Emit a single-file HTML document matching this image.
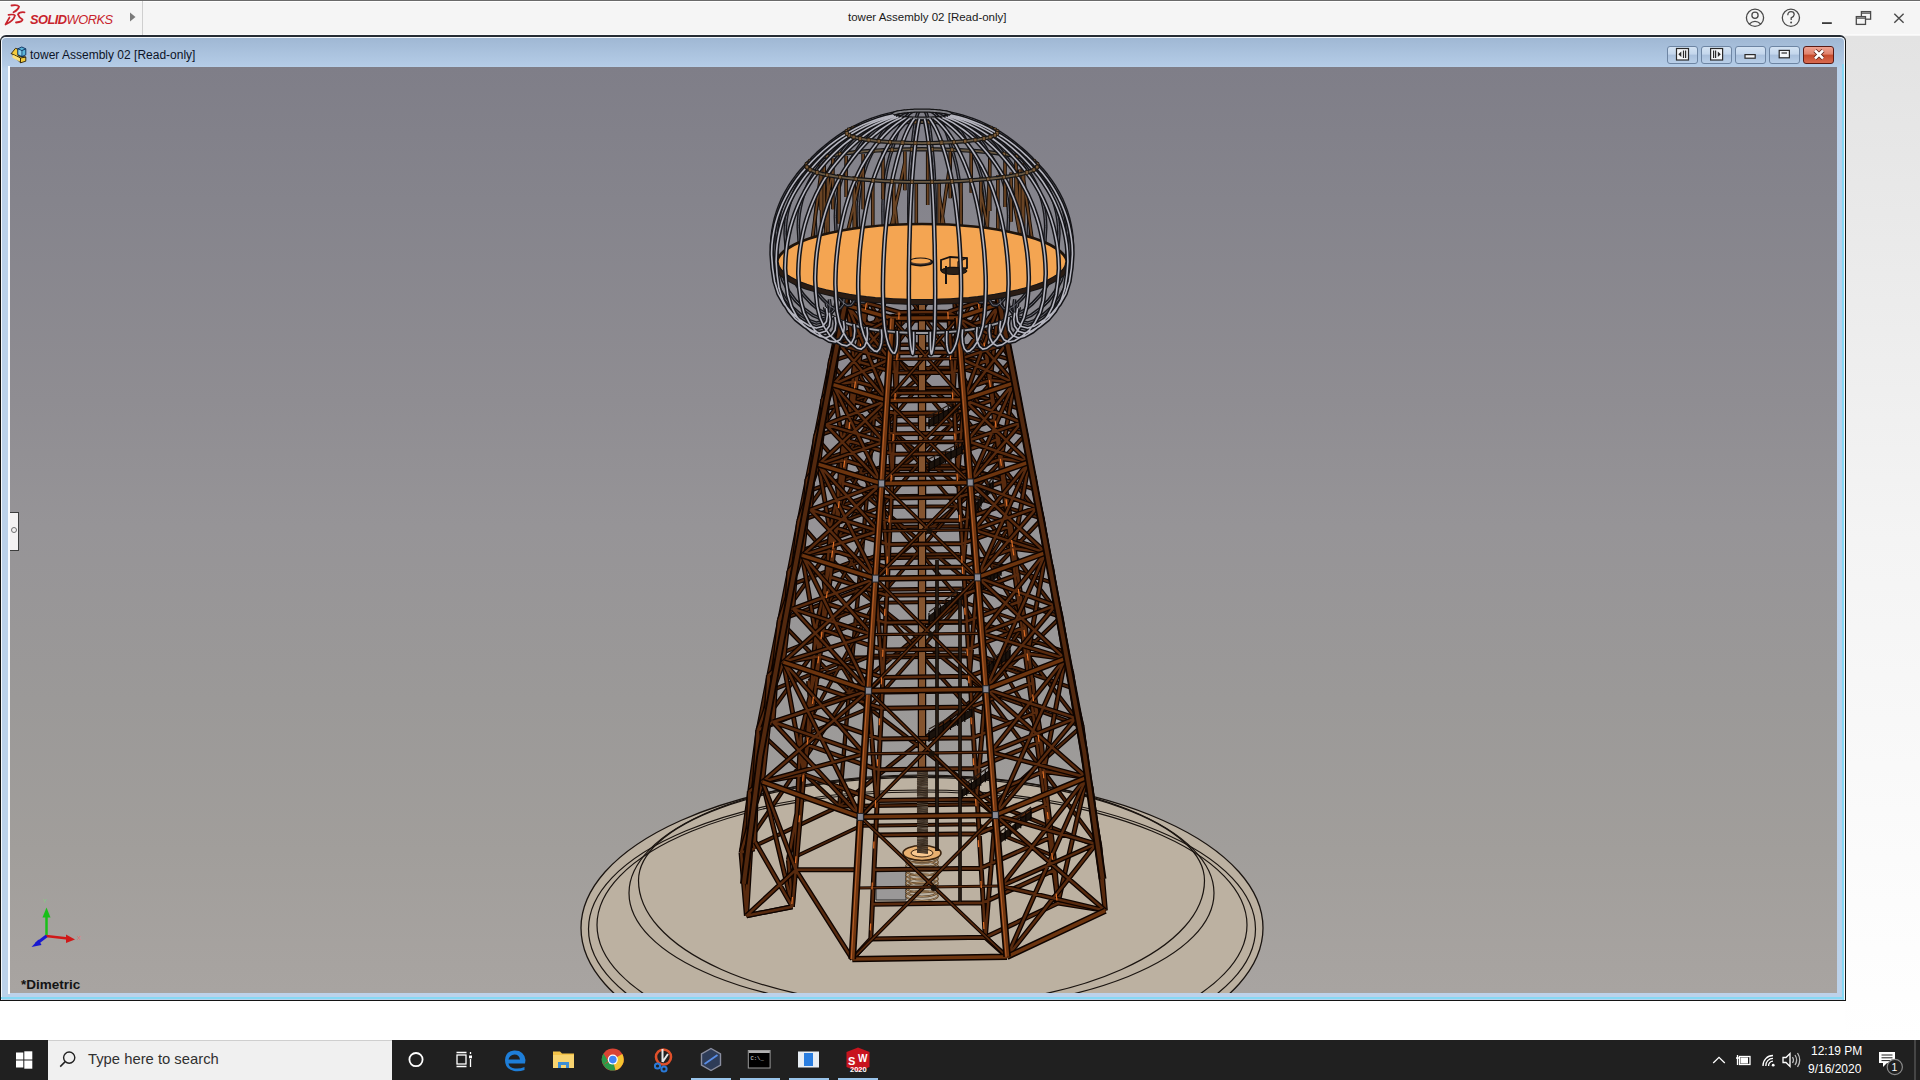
<!DOCTYPE html>
<html><head><meta charset="utf-8">
<style>
*{margin:0;padding:0;box-sizing:border-box}
html,body{width:1920px;height:1080px;overflow:hidden;background:#fff;font-family:"Liberation Sans",sans-serif;position:relative}
.abs{position:absolute}
#topbar{left:0;top:0;width:1920px;height:36px;background:#f5f5f5;border-top:1px solid #6a6a6a}
#rightbg{left:1845px;top:36px;width:75px;height:1004px;background:linear-gradient(#e3e3e3,#f4f4f4 50%,#ffffff)}
#win{left:0;top:35px;width:1846px;height:966px;border:1px solid #141414;border-top:2px solid #262c34;border-radius:6px 6px 0 0;background:linear-gradient(#9fb7d3 0px,#b3cbe6 28px,#bad1ea 32px,#bcd2ea 100%)}
#winin{left:1px;top:37px;width:1844px;height:963px;border:1px solid #f4f8fc;border-radius:5px 5px 0 0;border-bottom:none}
#vp{left:10px;top:67px;width:1827px;height:926px;background:linear-gradient(rgb(127,126,136) 0%,rgb(133,132,140) 14.4%,rgb(143,141,146) 36%,rgb(150,148,151) 49.5%,rgb(155,153,152) 68.4%,rgb(161,158,155) 84.6%,rgb(167,163,160) 97%,rgb(168,164,161) 100%)}
#taskbar{left:0;top:1040px;width:1920px;height:40px;background:#202020}
.t12{font-size:12px;color:#000;white-space:nowrap}
.wbtn{position:absolute;top:46px;width:31px;height:18px;border:1px solid #6d85a3;border-radius:3px;background:linear-gradient(#d4e3f3 0%,#c3d6ec 45%,#a9c0dc 50%,#b9cfe8 100%)}
.wbtn.cl{border-color:#5a1a14;background:linear-gradient(#eea292 0%,#e0826c 45%,#c64a2c 50%,#d86a50 100%)}
</style></head><body>
<div id="topbar" class="abs"></div>
<div class="abs" style="left:0;top:1px;width:1920px;height:1px;background:#ffffff"></div>
<div class="abs" style="left:0;top:34px;width:1920px;height:1px;background:#fbfbfb"></div>
<div class="abs" style="left:142px;top:1px;width:1px;height:34px;background:#cfcfcf"></div>
<!-- SW logo -->
<svg class="abs" style="left:0;top:0" width="30" height="30" viewBox="0 0 30 30">
<path d="M11.5,5.5 Q17.5,4.5 19,6.5 Q18.5,9.5 13.5,12.3" stroke="#c8232c" stroke-width="1.8" fill="none" stroke-linecap="round"/>
<path d="M8.5,14.8 Q14,14.0 15,15.5 Q13.5,21 5.5,24.5 L9.5,17.5" stroke="#c8232c" stroke-width="1.7" fill="none" stroke-linecap="round" stroke-linejoin="round"/>
<path d="M24.5,12.3 Q19,11.8 18,14.5 Q19,17.5 22.5,19.5 Q23,21.7 16,22.5" stroke="#c8232c" stroke-width="1.8" fill="none" stroke-linecap="round"/>
</svg>
<div class="abs" style="left:30px;top:11.5px;font-size:12.8px;color:#c8232c;white-space:nowrap;font-style:italic;letter-spacing:-0.5px"><b>SOLID</b><span style="font-weight:normal">WORKS</span></div>
<svg class="abs" style="left:128px;top:11px" width="10" height="12"><path d="M2,1.5 L7.5,6 L2,10.5 Z" fill="#7a7a7a"/></svg>
<div class="abs" style="left:848px;top:11px;font-size:11.5px;color:#1a1a1a;white-space:nowrap">tower Assembly 02 [Read-only]</div>
<!-- top right icons -->
<svg class="abs" style="left:1740px;top:3px" width="180" height="30" viewBox="1740 3 180 30">
<g fill="none" stroke="#4a4a4a" stroke-width="1.3">
<circle cx="1755" cy="17.8" r="8.6"/>
<circle cx="1755" cy="15.2" r="3.1"/>
<path d="M1749.3,24 Q1755,18.8 1760.7,24"/>
<circle cx="1790.9" cy="17.8" r="8.6"/>
<path d="M1787.8,15.2 Q1787.8,11.7 1791,11.7 Q1794.2,11.7 1794.2,14.5 Q1794.2,16.3 1791.2,17.8 L1791.2,20"/>
<rect x="1861.4" y="11.6" width="9.2" height="7.6"/>
<rect x="1856.3" y="16.6" width="9.2" height="7.8" fill="#f5f5f5"/>
<path d="M1856.3,18.2 H1865.5 M1861.4,13.2 H1870.6"/>
<path d="M1894.3,13.7 L1903.6,22.8 M1903.6,13.7 L1894.3,22.8" stroke-width="1.4"/>
</g>
<circle cx="1791.1" cy="22.6" r="1" fill="#4a4a4a"/>
<rect x="1822" y="22.2" width="9.8" height="1.8" fill="#3a3a3a"/>
</svg>
<div id="rightbg" class="abs"></div>
<div id="win" class="abs"></div>
<div id="winin" class="abs"></div>
<div class="abs" style="left:1842px;top:64px;width:2px;height:936px;background:#86d8f4"></div>
<div class="abs" style="left:1px;top:997px;width:1843px;height:2px;background:#86d8f4"></div>
<div class="abs" style="left:8px;top:66px;width:2px;height:928px;background:#f8fbff"></div>
<!-- doc icon -->
<svg class="abs" style="left:10px;top:46px" width="20" height="18" viewBox="10 46 20 18">
<path d="M11.3,53.5 L15.5,48.3 L18.2,49.2 L18.2,56 L25.8,57 L25.8,61.2 L20.5,62.8 Z" fill="#f4cc3c" stroke="#2a2008" stroke-width="0.9" stroke-linejoin="round"/>
<path d="M11.3,53.5 L20.5,58 L25.8,57 M20.5,58 L20.5,62.8" fill="none" stroke="#2a2008" stroke-width="0.9"/>
<path d="M12.5,54.5 L19.8,58.2 L19.8,61.5 L12.5,57.8 Z" fill="#fbe27a"/>
<path d="M17.8,48.8 L21.8,47 L25.8,48.8 L25.8,54.8 L21.8,56.6 L17.8,54.8 Z" fill="#5ab4d8" stroke="#0a2a5a" stroke-width="0.9" stroke-linejoin="round"/>
<path d="M17.8,48.8 L21.8,50.6 L25.8,48.8 M21.8,50.6 V56.6" fill="none" stroke="#0a2a5a" stroke-width="0.9"/>
<path d="M18.6,49.6 L21.4,50.9 L21.4,55.4 L18.6,54.2 Z" fill="#8ad0ec"/>
</svg>
<div class="abs t12" style="left:30px;top:48px;color:#0c1428">tower Assembly 02 [Read-only]</div>
<!-- window buttons -->
<div class="wbtn" style="left:1667px"></div>
<div class="wbtn" style="left:1701px"></div>
<div class="wbtn" style="left:1735px"></div>
<div class="wbtn" style="left:1769px"></div>
<div class="wbtn cl" style="left:1803px"></div>
<svg class="abs" style="left:1660px;top:44px" width="180" height="22" viewBox="1660 44 180 22">
<g fill="#f4f6f8" stroke="#2a2a2a" stroke-width="1.2">
<rect x="1676.5" y="48.5" width="12" height="11.5"/>
<rect x="1710.6" y="48.5" width="12" height="11.5"/>
<rect x="1745" y="54.6" width="10.2" height="3.6"/>
<rect x="1779.2" y="50.4" width="10.2" height="7.4"/>
</g>
<g stroke="#2a2a2a" stroke-width="1.2" fill="none">
<path d="M1683.5,50.5 V58 M1685.6,50.5 V58"/>
<path d="M1713.6,50.5 V58 M1715.6,50.5 V58"/>
<path d="M1781.5,53 H1787"/>
</g>
<path d="M1678.3,54.2 L1681.3,51.5 V57 Z" fill="#2a2a2a"/>
<path d="M1720.8,54.2 L1717.8,51.5 V57 Z" fill="#2a2a2a"/>
<path d="M1815,50.5 L1823,58.5 M1823,50.5 L1815,58.5" stroke="#5a2018" stroke-width="4.2"/>
<path d="M1815,50.5 L1823,58.5 M1823,50.5 L1815,58.5" stroke="#ffffff" stroke-width="2.6"/>
</svg>
<div id="vp" class="abs"></div>
<svg class="abs" style="left:0;top:0" width="1920" height="1080" viewBox="0 0 1920 1080">
<defs><clipPath id="vpc"><rect x="10" y="67" width="1827" height="926"/></clipPath></defs>
<g clip-path="url(#vpc)">
<ellipse cx="922" cy="928" rx="341" ry="152" fill="#bcb1a1" stroke="#1a1410" stroke-width="1.3"/><ellipse cx="922" cy="929" rx="333.5" ry="139" fill="none" stroke="#1a1410" stroke-width="1.2"/><ellipse cx="922" cy="925" rx="325" ry="133" fill="none" stroke="#1a1410" stroke-width="1.2"/><ellipse cx="921.5" cy="893" rx="292.5" ry="118" fill="none" stroke="#1a1410" stroke-width="1.2"/><path d="M638.5,880.4 A283,103 0 0 1 1204.5,880.4 A283,126 0 0 1 638.5,880.4 Z" fill="none" stroke="#1a1410" stroke-width="1.2"/>
<path d="M952.3,273.0 L880.4,345.0 M886.5,273.7 L957.5,344.2 M954.0,296.5 L884.5,297.2 M955.8,320.0 L882.5,320.7 M957.5,344.2 L874.1,416.2 M880.4,345.0 L962.8,415.2 M959.3,367.6 L878.3,368.5 M961.0,391.1 L876.2,392.0 M962.8,415.2 L866.9,496.6 M874.1,416.2 L968.9,495.4 M964.8,441.7 L871.7,442.7 M966.8,468.2 L869.4,469.3 M968.9,495.4 L858.5,589.9 M866.9,496.6 L976.0,588.4 M971.2,526.1 L864.1,527.4 M973.6,556.8 L861.4,558.2 M976.0,588.4 L849.0,692.8 M858.5,589.9 L984.0,691.0 M978.7,622.2 L855.3,623.8 M981.3,656.1 L852.2,657.8 M984.0,691.0 L839.3,806.2 M849.0,692.8 L994.1,804.0 M952.3,273.0 L886.5,273.7 M957.5,344.2 L880.4,345.0 M962.8,415.2 L874.1,416.2 M968.9,495.4 L866.9,496.6 M976.0,588.4 L858.5,589.9 M984.0,691.0 L849.0,692.8 M994.1,804.0 L839.3,806.2 M886.5,273.7 L830.3,361.7 M845.5,287.2 L880.4,345.0 M884.5,297.2 L840.5,311.8 M882.5,320.7 L835.5,336.4 M880.4,345.0 L815.5,436.6 M830.3,361.7 L874.1,416.2 M878.3,368.5 L825.4,386.4 M876.2,392.0 L820.5,411.1 M874.1,416.2 L798.7,521.4 M815.5,436.6 L866.9,496.6 M871.7,442.7 L809.9,464.6 M869.4,469.3 L804.4,492.6 M866.9,496.6 L779.3,620.4 M798.7,521.4 L858.5,589.9 M864.1,527.4 L792.3,554.1 M861.4,558.2 L785.9,586.8 M858.5,589.9 L757.8,730.4 M779.3,620.4 L849.0,692.8 M855.3,623.8 L772.2,656.7 M852.2,657.8 L765.1,693.0 M849.0,692.8 L741.1,852.4 M757.8,730.4 L839.3,806.2 M886.5,273.7 L845.5,287.2 M880.4,345.0 L830.3,361.7 M874.1,416.2 L815.5,436.6 M866.9,496.6 L798.7,521.4 M858.5,589.9 L779.3,620.4 M849.0,692.8 L757.8,730.4 M839.3,806.2 L741.1,852.4 M996.6,285.7 L957.5,344.2 M952.3,273.0 L1011.4,359.9 M1001.5,310.2 L954.0,296.5 M1006.4,334.6 L955.8,320.0 M1011.4,359.9 L962.8,415.2 M957.5,344.2 L1025.8,434.3 M1016.2,384.4 L959.3,367.6 M1020.9,409.0 L961.0,391.1 M1025.8,434.3 L968.9,495.4 M962.8,415.2 L1042.2,518.6 M1031.2,462.1 L964.8,441.7 M1036.6,489.9 L966.8,468.2 M1042.2,518.6 L976.0,588.4 M968.9,495.4 L1061.0,616.9 M1048.4,551.0 L971.2,526.1 M1054.6,583.5 L973.6,556.8 M1061.0,616.9 L984.0,691.0 M976.0,588.4 L1081.9,726.1 M1067.9,652.9 L978.7,622.2 M1074.8,689.0 L981.3,656.1 M1081.9,726.1 L994.1,804.0 M984.0,691.0 L1099.9,847.3 M996.6,285.7 L952.3,273.0 M1011.4,359.9 L957.5,344.2 M1025.8,434.3 L962.8,415.2 M1042.2,518.6 L968.9,495.4 M1061.0,616.9 L976.0,588.4 M1081.9,726.1 L984.0,691.0 M1099.9,847.3 L994.1,804.0 M996.6,285.7 L1011.4,359.9 M1011.4,359.9 L1025.8,434.3 M1025.8,434.3 L1042.2,518.6 M1042.2,518.6 L1061.0,616.9 M1061.0,616.9 L1081.9,726.1 M1081.9,726.1 L1099.9,847.3 M952.3,273.0 L957.5,344.2 M957.5,344.2 L962.8,415.2 M962.8,415.2 L968.9,495.4 M968.9,495.4 L976.0,588.4 M976.0,588.4 L984.0,691.0 M984.0,691.0 L994.1,804.0 M886.5,273.7 L880.4,345.0 M880.4,345.0 L874.1,416.2 M874.1,416.2 L866.9,496.6 M866.9,496.6 L858.5,589.9 M858.5,589.9 L849.0,692.8 M849.0,692.8 L839.3,806.2 M845.5,287.2 L830.3,361.7 M830.3,361.7 L815.5,436.6 M815.5,436.6 L798.7,521.4 M798.7,521.4 L779.3,620.4 M779.3,620.4 L757.8,730.4 M757.8,730.4 L741.1,852.4" stroke="#0e0400" stroke-width="4.4" fill="none" stroke-linecap="butt"/><path d="M952.3,273.0 L880.4,345.0 M886.5,273.7 L957.5,344.2 M954.0,296.5 L884.5,297.2 M955.8,320.0 L882.5,320.7 M957.5,344.2 L874.1,416.2 M880.4,345.0 L962.8,415.2 M959.3,367.6 L878.3,368.5 M961.0,391.1 L876.2,392.0 M962.8,415.2 L866.9,496.6 M874.1,416.2 L968.9,495.4 M964.8,441.7 L871.7,442.7 M966.8,468.2 L869.4,469.3 M968.9,495.4 L858.5,589.9 M866.9,496.6 L976.0,588.4 M971.2,526.1 L864.1,527.4 M973.6,556.8 L861.4,558.2 M976.0,588.4 L849.0,692.8 M858.5,589.9 L984.0,691.0 M978.7,622.2 L855.3,623.8 M981.3,656.1 L852.2,657.8 M984.0,691.0 L839.3,806.2 M849.0,692.8 L994.1,804.0 M952.3,273.0 L886.5,273.7 M957.5,344.2 L880.4,345.0 M962.8,415.2 L874.1,416.2 M968.9,495.4 L866.9,496.6 M976.0,588.4 L858.5,589.9 M984.0,691.0 L849.0,692.8 M994.1,804.0 L839.3,806.2 M886.5,273.7 L830.3,361.7 M845.5,287.2 L880.4,345.0 M884.5,297.2 L840.5,311.8 M882.5,320.7 L835.5,336.4 M880.4,345.0 L815.5,436.6 M830.3,361.7 L874.1,416.2 M878.3,368.5 L825.4,386.4 M876.2,392.0 L820.5,411.1 M874.1,416.2 L798.7,521.4 M815.5,436.6 L866.9,496.6 M871.7,442.7 L809.9,464.6 M869.4,469.3 L804.4,492.6 M866.9,496.6 L779.3,620.4 M798.7,521.4 L858.5,589.9 M864.1,527.4 L792.3,554.1 M861.4,558.2 L785.9,586.8 M858.5,589.9 L757.8,730.4 M779.3,620.4 L849.0,692.8 M855.3,623.8 L772.2,656.7 M852.2,657.8 L765.1,693.0 M849.0,692.8 L741.1,852.4 M757.8,730.4 L839.3,806.2 M886.5,273.7 L845.5,287.2 M880.4,345.0 L830.3,361.7 M874.1,416.2 L815.5,436.6 M866.9,496.6 L798.7,521.4 M858.5,589.9 L779.3,620.4 M849.0,692.8 L757.8,730.4 M839.3,806.2 L741.1,852.4 M996.6,285.7 L957.5,344.2 M952.3,273.0 L1011.4,359.9 M1001.5,310.2 L954.0,296.5 M1006.4,334.6 L955.8,320.0 M1011.4,359.9 L962.8,415.2 M957.5,344.2 L1025.8,434.3 M1016.2,384.4 L959.3,367.6 M1020.9,409.0 L961.0,391.1 M1025.8,434.3 L968.9,495.4 M962.8,415.2 L1042.2,518.6 M1031.2,462.1 L964.8,441.7 M1036.6,489.9 L966.8,468.2 M1042.2,518.6 L976.0,588.4 M968.9,495.4 L1061.0,616.9 M1048.4,551.0 L971.2,526.1 M1054.6,583.5 L973.6,556.8 M1061.0,616.9 L984.0,691.0 M976.0,588.4 L1081.9,726.1 M1067.9,652.9 L978.7,622.2 M1074.8,689.0 L981.3,656.1 M1081.9,726.1 L994.1,804.0 M984.0,691.0 L1099.9,847.3 M996.6,285.7 L952.3,273.0 M1011.4,359.9 L957.5,344.2 M1025.8,434.3 L962.8,415.2 M1042.2,518.6 L968.9,495.4 M1061.0,616.9 L976.0,588.4 M1081.9,726.1 L984.0,691.0 M1099.9,847.3 L994.1,804.0 M996.6,285.7 L1011.4,359.9 M1011.4,359.9 L1025.8,434.3 M1025.8,434.3 L1042.2,518.6 M1042.2,518.6 L1061.0,616.9 M1061.0,616.9 L1081.9,726.1 M1081.9,726.1 L1099.9,847.3 M952.3,273.0 L957.5,344.2 M957.5,344.2 L962.8,415.2 M962.8,415.2 L968.9,495.4 M968.9,495.4 L976.0,588.4 M976.0,588.4 L984.0,691.0 M984.0,691.0 L994.1,804.0 M886.5,273.7 L880.4,345.0 M880.4,345.0 L874.1,416.2 M874.1,416.2 L866.9,496.6 M866.9,496.6 L858.5,589.9 M858.5,589.9 L849.0,692.8 M849.0,692.8 L839.3,806.2 M845.5,287.2 L830.3,361.7 M830.3,361.7 L815.5,436.6 M815.5,436.6 L798.7,521.4 M798.7,521.4 L779.3,620.4 M779.3,620.4 L757.8,730.4 M757.8,730.4 L741.1,852.4" stroke="#4a230b" stroke-width="2.0" fill="none" stroke-linecap="butt"/><path d="M944.5,278.9 L891.2,352.1 M895.8,279.4 L948.4,351.5 M946.4,315.2 L893.5,315.7 M948.4,351.5 L886.6,424.8 M891.2,352.1 L952.3,424.1 M950.3,387.8 L888.9,388.4 M952.3,424.1 L881.3,507.1 M886.6,424.8 L956.7,506.2 M954.5,465.2 L883.9,466.0 M956.7,506.2 L875.0,602.8 M881.3,507.1 L962.0,601.7 M959.4,554.0 L878.2,554.9 M962.0,601.7 L868.0,708.7 M875.0,602.8 L968.0,707.3 M965.0,654.5 L871.5,655.7 M944.5,278.9 L895.8,279.4 M948.4,351.5 L891.2,352.1 M952.3,424.1 L886.6,424.8 M956.7,506.2 L881.3,507.1 M962.0,601.7 L875.0,602.8 M968.0,707.3 L868.0,708.7 M975.6,824.2 L861.1,825.8 M895.8,279.4 L854.2,364.5 M865.4,289.4 L891.2,352.1 M893.5,315.7 L859.8,326.9 M891.2,352.1 L843.2,439.9 M854.2,364.5 L886.6,424.8 M888.9,388.4 L848.7,402.2 M886.6,424.8 L830.8,525.5 M843.2,439.9 L881.3,507.1 M883.9,466.0 L837.0,482.7 M881.3,507.1 L816.4,625.4 M830.8,525.5 L875.0,602.8 M878.2,554.9 L823.6,575.4 M875.0,602.8 L800.6,736.5 M816.4,625.4 L868.0,708.7 M871.5,655.7 L808.5,680.9 M895.8,279.4 L865.4,289.4 M891.2,352.1 L854.2,364.5 M886.6,424.8 L843.2,439.9 M881.3,507.1 L830.8,525.5 M875.0,602.8 L816.4,625.4 M868.0,708.7 L800.6,736.5 M861.1,825.8 L788.4,860.0 M977.3,288.3 L948.4,351.5 M944.5,278.9 L988.2,363.1 M982.7,325.7 L946.4,315.2 M988.2,363.1 L952.3,424.1 M948.4,351.5 L998.9,438.2 M993.5,400.6 L950.3,387.8 M998.9,438.2 L956.7,506.2 M952.3,424.1 L1011.0,523.4 M1004.9,480.8 L954.5,465.2 M1011.0,523.4 L962.0,601.7 M956.7,506.2 L1024.9,622.8 M1017.9,573.1 L959.4,554.0 M1024.9,622.8 L968.0,707.3 M962.0,601.7 L1040.4,733.3 M1032.6,678.1 L965.0,654.5 M977.3,288.3 L944.5,278.9 M988.2,363.1 L948.4,351.5 M998.9,438.2 L952.3,424.1 M1011.0,523.4 L956.7,506.2 M1024.9,622.8 L962.0,601.7 M1040.4,733.3 L968.0,707.3 M1054.0,856.2 L975.6,824.2" stroke="#0e0400" stroke-width="4.0" fill="none" stroke-linecap="butt"/><path d="M944.5,278.9 L891.2,352.1 M895.8,279.4 L948.4,351.5 M946.4,315.2 L893.5,315.7 M948.4,351.5 L886.6,424.8 M891.2,352.1 L952.3,424.1 M950.3,387.8 L888.9,388.4 M952.3,424.1 L881.3,507.1 M886.6,424.8 L956.7,506.2 M954.5,465.2 L883.9,466.0 M956.7,506.2 L875.0,602.8 M881.3,507.1 L962.0,601.7 M959.4,554.0 L878.2,554.9 M962.0,601.7 L868.0,708.7 M875.0,602.8 L968.0,707.3 M965.0,654.5 L871.5,655.7 M944.5,278.9 L895.8,279.4 M948.4,351.5 L891.2,352.1 M952.3,424.1 L886.6,424.8 M956.7,506.2 L881.3,507.1 M962.0,601.7 L875.0,602.8 M968.0,707.3 L868.0,708.7 M975.6,824.2 L861.1,825.8 M895.8,279.4 L854.2,364.5 M865.4,289.4 L891.2,352.1 M893.5,315.7 L859.8,326.9 M891.2,352.1 L843.2,439.9 M854.2,364.5 L886.6,424.8 M888.9,388.4 L848.7,402.2 M886.6,424.8 L830.8,525.5 M843.2,439.9 L881.3,507.1 M883.9,466.0 L837.0,482.7 M881.3,507.1 L816.4,625.4 M830.8,525.5 L875.0,602.8 M878.2,554.9 L823.6,575.4 M875.0,602.8 L800.6,736.5 M816.4,625.4 L868.0,708.7 M871.5,655.7 L808.5,680.9 M895.8,279.4 L865.4,289.4 M891.2,352.1 L854.2,364.5 M886.6,424.8 L843.2,439.9 M881.3,507.1 L830.8,525.5 M875.0,602.8 L816.4,625.4 M868.0,708.7 L800.6,736.5 M861.1,825.8 L788.4,860.0 M977.3,288.3 L948.4,351.5 M944.5,278.9 L988.2,363.1 M982.7,325.7 L946.4,315.2 M988.2,363.1 L952.3,424.1 M948.4,351.5 L998.9,438.2 M993.5,400.6 L950.3,387.8 M998.9,438.2 L956.7,506.2 M952.3,424.1 L1011.0,523.4 M1004.9,480.8 L954.5,465.2 M1011.0,523.4 L962.0,601.7 M956.7,506.2 L1024.9,622.8 M1017.9,573.1 L959.4,554.0 M1024.9,622.8 L968.0,707.3 M962.0,601.7 L1040.4,733.3 M1032.6,678.1 L965.0,654.5 M977.3,288.3 L944.5,278.9 M988.2,363.1 L948.4,351.5 M998.9,438.2 L952.3,424.1 M1011.0,523.4 L956.7,506.2 M1024.9,622.8 L962.0,601.7 M1040.4,733.3 L968.0,707.3 M1054.0,856.2 L975.6,824.2" stroke="#4a230b" stroke-width="1.8" fill="none" stroke-linecap="butt"/><path d="M922.0,300.0 L922.0,770.0" stroke="#0e0400" stroke-width="8.5" fill="none" stroke-linecap="butt"/><path d="M922.0,300.0 L922.0,770.0" stroke="#84542f" stroke-width="6" fill="none" stroke-linecap="butt"/><g><path d="M876,868 H906 V900 H876 Z" fill="#9a9898" stroke="#2a2a2a" stroke-width="1"/><ellipse cx="922" cy="858.0" rx="16" ry="5" fill="none" stroke="#3a2a1a" stroke-width="1.6"/><ellipse cx="922" cy="858.0" rx="16" ry="5" fill="none" stroke="#c8a070" stroke-width="0.8"/><ellipse cx="922" cy="862.2" rx="16" ry="5" fill="none" stroke="#3a2a1a" stroke-width="1.6"/><ellipse cx="922" cy="862.2" rx="16" ry="5" fill="none" stroke="#c8a070" stroke-width="0.8"/><ellipse cx="922" cy="866.4" rx="16" ry="5" fill="none" stroke="#3a2a1a" stroke-width="1.6"/><ellipse cx="922" cy="866.4" rx="16" ry="5" fill="none" stroke="#c8a070" stroke-width="0.8"/><ellipse cx="922" cy="870.6" rx="16" ry="5" fill="none" stroke="#3a2a1a" stroke-width="1.6"/><ellipse cx="922" cy="870.6" rx="16" ry="5" fill="none" stroke="#c8a070" stroke-width="0.8"/><ellipse cx="922" cy="874.8" rx="16" ry="5" fill="none" stroke="#3a2a1a" stroke-width="1.6"/><ellipse cx="922" cy="874.8" rx="16" ry="5" fill="none" stroke="#c8a070" stroke-width="0.8"/><ellipse cx="922" cy="879.0" rx="16" ry="5" fill="none" stroke="#3a2a1a" stroke-width="1.6"/><ellipse cx="922" cy="879.0" rx="16" ry="5" fill="none" stroke="#c8a070" stroke-width="0.8"/><ellipse cx="922" cy="883.2" rx="16" ry="5" fill="none" stroke="#3a2a1a" stroke-width="1.6"/><ellipse cx="922" cy="883.2" rx="16" ry="5" fill="none" stroke="#c8a070" stroke-width="0.8"/><ellipse cx="922" cy="887.4" rx="16" ry="5" fill="none" stroke="#3a2a1a" stroke-width="1.6"/><ellipse cx="922" cy="887.4" rx="16" ry="5" fill="none" stroke="#c8a070" stroke-width="0.8"/><ellipse cx="922" cy="891.6" rx="16" ry="5" fill="none" stroke="#3a2a1a" stroke-width="1.6"/><ellipse cx="922" cy="891.6" rx="16" ry="5" fill="none" stroke="#c8a070" stroke-width="0.8"/><ellipse cx="922" cy="895.8" rx="16" ry="5" fill="none" stroke="#3a2a1a" stroke-width="1.6"/><ellipse cx="922" cy="895.8" rx="16" ry="5" fill="none" stroke="#c8a070" stroke-width="0.8"/><ellipse cx="922" cy="853" rx="19" ry="7.5" fill="#e8b070" stroke="#3a2410" stroke-width="1.6"/><ellipse cx="922" cy="853" rx="11" ry="4" fill="#f8c890" stroke="#3a2410" stroke-width="1"/></g><path d="M917.0,770.0 L928.0,771.0 M917.0,772.1 L928.0,773.1 M917.0,774.2 L928.0,775.2 M917.0,776.3 L928.0,777.3 M917.0,778.4 L928.0,779.4 M917.0,780.5 L928.0,781.5 M917.0,782.6 L928.0,783.6 M917.0,784.7 L928.0,785.7 M917.0,786.8 L928.0,787.8 M917.0,788.9 L928.0,789.9 M917.0,791.0 L928.0,792.0 M917.0,793.1 L928.0,794.1 M917.0,795.2 L928.0,796.2 M917.0,797.3 L928.0,798.3 M917.0,799.4 L928.0,800.4 M917.0,801.5 L928.0,802.5 M917.0,803.6 L928.0,804.6 M917.0,805.7 L928.0,806.7 M917.0,807.8 L928.0,808.8 M917.0,809.9 L928.0,810.9 M917.0,812.0 L928.0,813.0 M917.0,814.1 L928.0,815.1 M917.0,816.2 L928.0,817.2 M917.0,818.3 L928.0,819.3 M917.0,820.4 L928.0,821.4 M917.0,822.5 L928.0,823.5 M917.0,824.6 L928.0,825.6 M917.0,826.7 L928.0,827.7 M917.0,828.8 L928.0,829.8 M917.0,830.9 L928.0,831.9 M917.0,833.0 L928.0,834.0 M917.0,835.1 L928.0,836.1 M917.0,837.2 L928.0,838.2 M917.0,839.3 L928.0,840.3 M917.0,841.4 L928.0,842.4 M917.0,843.5 L928.0,844.5 M917.0,845.6 L928.0,846.6 M917.0,847.7 L928.0,848.7 M917.0,849.8 L928.0,850.8 M917.0,851.9 L928.0,852.9" stroke="#1a1008" stroke-width="1.8" fill="none" stroke-linecap="butt"/><path d="M917.0,770.0 L928.0,771.0 M917.0,772.1 L928.0,773.1 M917.0,774.2 L928.0,775.2 M917.0,776.3 L928.0,777.3 M917.0,778.4 L928.0,779.4 M917.0,780.5 L928.0,781.5 M917.0,782.6 L928.0,783.6 M917.0,784.7 L928.0,785.7 M917.0,786.8 L928.0,787.8 M917.0,788.9 L928.0,789.9 M917.0,791.0 L928.0,792.0 M917.0,793.1 L928.0,794.1 M917.0,795.2 L928.0,796.2 M917.0,797.3 L928.0,798.3 M917.0,799.4 L928.0,800.4 M917.0,801.5 L928.0,802.5 M917.0,803.6 L928.0,804.6 M917.0,805.7 L928.0,806.7 M917.0,807.8 L928.0,808.8 M917.0,809.9 L928.0,810.9 M917.0,812.0 L928.0,813.0 M917.0,814.1 L928.0,815.1 M917.0,816.2 L928.0,817.2 M917.0,818.3 L928.0,819.3 M917.0,820.4 L928.0,821.4 M917.0,822.5 L928.0,823.5 M917.0,824.6 L928.0,825.6 M917.0,826.7 L928.0,827.7 M917.0,828.8 L928.0,829.8 M917.0,830.9 L928.0,831.9 M917.0,833.0 L928.0,834.0 M917.0,835.1 L928.0,836.1 M917.0,837.2 L928.0,838.2 M917.0,839.3 L928.0,840.3 M917.0,841.4 L928.0,842.4 M917.0,843.5 L928.0,844.5 M917.0,845.6 L928.0,846.6 M917.0,847.7 L928.0,848.7 M917.0,849.8 L928.0,850.8 M917.0,851.9 L928.0,852.9" stroke="#5a4a3a" stroke-width="1.0" fill="none" stroke-linecap="butt"/><path d="M865.4,289.4 L856.2,381.5 M867.1,303.1 L854.2,364.5 M859.8,326.9 L861.7,342.3 M854.2,364.5 L845.5,460.5 M856.2,381.5 L843.2,439.9 M848.7,402.2 L850.9,421.0 M843.2,439.9 L833.4,550.6 M845.5,460.5 L830.8,525.5 M837.0,482.7 L839.5,505.6 M830.8,525.5 L819.5,656.3 M833.4,550.6 L816.4,625.4 M823.6,575.4 L826.5,603.5 M816.4,625.4 L804.0,774.5 M819.5,656.3 L800.6,736.5 M808.5,680.9 L811.8,715.4 M800.6,736.5 L792.4,906.8 M804.0,774.5 L788.4,860.0 M865.4,289.4 L867.1,303.1 M854.2,364.5 L856.2,381.5 M843.2,439.9 L845.5,460.5 M830.8,525.5 L833.4,550.6 M816.4,625.4 L819.5,656.3 M800.6,736.5 L804.0,774.5 M788.4,860.0 L792.4,906.8 M979.0,302.0 L988.2,363.1 M977.3,288.3 L990.2,380.1 M984.6,341.0 L982.7,325.7 M990.2,380.1 L998.9,438.2 M988.2,363.1 L1001.2,458.8 M995.7,419.4 L993.5,400.6 M1001.2,458.8 L1011.0,523.4 M998.9,438.2 L1013.6,548.5 M1007.4,503.7 L1004.9,480.8 M1013.6,548.5 L1024.9,622.8 M1011.0,523.4 L1028.0,653.7 M1020.8,601.1 L1017.9,573.1 M1028.0,653.7 L1040.4,733.3 M1024.9,622.8 L1043.8,771.3 M1035.9,712.5 L1032.6,678.1 M1043.8,771.3 L1054.0,856.2 M1040.4,733.3 L1058.0,903.1 M979.0,302.0 L977.3,288.3 M990.2,380.1 L988.2,363.1 M1001.2,458.8 L998.9,438.2 M1013.6,548.5 L1011.0,523.4 M1028.0,653.7 L1024.9,622.8 M1043.8,771.3 L1040.4,733.3 M1058.0,903.1 L1054.0,856.2 M898.9,332.6 L949.7,332.1 M898.0,352.7 L950.9,352.2 M897.0,372.9 L952.0,372.3 M895.1,413.5 L954.3,412.8 M894.1,433.8 L955.5,433.2 M893.1,454.2 L956.6,453.5 M891.0,497.9 L959.1,497.1 M889.9,521.2 L960.5,520.4 M888.8,544.5 L961.8,543.6 M886.3,595.2 L964.7,594.2 M885.0,622.6 L966.2,621.6 M883.7,650.0 L967.8,649.0 M880.9,708.2 L971.1,707.0 M879.4,738.9 L972.9,737.7 M877.9,769.7 L974.6,768.5 M875.0,835.1 L978.6,833.7 M873.6,869.7 L980.8,868.2 M872.2,904.3 L983.1,902.7 M899.9,312.4 L948.6,311.9 M896.0,393.1 L953.2,392.5 M892.1,474.6 L957.8,473.9 M887.7,567.8 L963.1,566.9 M882.4,677.4 L969.4,676.3 M876.4,800.5 L976.4,799.2 M870.8,938.9 L985.3,937.3 M949.7,332.1 L981.8,321.5 M950.9,352.2 L984.6,341.0 M952.0,372.3 L987.4,360.5 M954.3,412.8 L992.9,399.8 M955.5,433.2 L995.7,419.4 M956.6,453.5 L998.4,439.1 M959.1,497.1 L1004.3,481.2 M960.5,520.4 L1007.4,503.7 M961.8,543.6 L1010.5,526.1 M964.7,594.2 L1017.2,574.8 M966.2,621.6 L1020.8,601.1 M967.8,649.0 L1024.4,627.4 M971.1,707.0 L1031.9,683.1 M972.9,737.7 L1035.9,712.5 M974.6,768.5 L1039.9,741.9 M978.6,833.7 L1047.4,804.3 M980.8,868.2 L1050.9,837.2 M983.1,902.7 L1054.4,870.1 M948.6,311.9 L979.0,302.0 M953.2,392.5 L990.2,380.1 M957.8,473.9 L1001.2,458.8 M963.1,566.9 L1013.6,548.5 M969.4,676.3 L1028.0,653.7 M976.4,799.2 L1043.8,771.3 M985.3,937.3 L1058.0,903.1 M864.4,322.7 L898.9,332.6 M861.7,342.3 L898.0,352.7 M858.9,361.9 L897.0,372.9 M853.5,401.2 L895.1,413.5 M850.9,421.0 L894.1,433.8 M848.2,440.7 L893.1,454.2 M842.5,483.0 L891.0,497.9 M839.5,505.6 L889.9,521.2 M836.5,528.1 L888.8,544.5 M829.9,577.0 L886.3,595.2 M826.5,603.5 L885.0,622.6 M823.0,629.9 L883.7,650.0 M815.6,685.9 L880.9,708.2 M811.8,715.4 L879.4,738.9 M807.9,745.0 L877.9,769.7 M867.1,303.1 L899.9,312.4 M856.2,381.5 L896.0,393.1 M845.5,460.5 L892.1,474.6 M833.4,550.6 L887.7,567.8 M819.5,656.3 L882.4,677.4 M804.0,774.5 L876.4,800.5 M867.1,303.1 L804.0,774.5 M899.9,312.4 L870.8,938.9 M948.6,311.9 L985.3,937.3 M979.0,302.0 L1058.0,903.1 M892.1,318.3 L899.9,312.4 M957.9,317.7 L948.6,311.9 M998.9,304.2 L979.0,302.0 M847.8,305.7 L867.1,303.1 M886.9,400.4 L896.0,393.1 M964.0,399.6 L953.2,392.5 M1014.1,382.8 L990.2,380.1 M833.0,384.7 L856.2,381.5 M881.6,483.5 L892.1,474.6 M970.3,482.5 L957.8,473.9 M1028.9,462.1 L1001.2,458.8 M818.6,464.4 L845.5,460.5 M875.5,578.6 L887.7,567.8 M977.5,577.4 L963.1,566.9 M1045.7,552.6 L1013.6,548.5 M802.2,555.4 L833.4,550.6 M868.4,690.7 L882.4,677.4 M985.9,689.2 L969.4,676.3 M1065.1,658.7 L1028.0,653.7 M783.4,662.2 L819.5,656.3 M860.4,816.9 L876.4,800.5 M995.4,815.1 L976.4,799.2 M1086.6,777.5 L1043.8,771.3 M762.5,781.8 L804.0,774.5 M852.3,959.1 L870.8,938.9 M1007.1,956.8 L985.3,937.3 M1105.3,910.6 L1058.0,903.1 M746.5,915.7 L792.4,906.8 M892.1,318.3 L896.0,393.1 M957.9,317.7 L953.2,392.5 M998.9,304.2 L990.2,380.1 M847.8,305.7 L856.2,381.5 M886.9,400.4 L892.1,474.6 M964.0,399.6 L957.8,473.9 M1014.1,382.8 L1001.2,458.8 M833.0,384.7 L845.5,460.5 M881.6,483.5 L887.7,567.8 M970.3,482.5 L963.1,566.9 M1028.9,462.1 L1013.6,548.5 M818.6,464.4 L833.4,550.6 M875.5,578.6 L882.4,677.4 M977.5,577.4 L969.4,676.3 M1045.7,552.6 L1028.0,653.7 M802.2,555.4 L819.5,656.3 M868.4,690.7 L876.4,800.5 M985.9,689.2 L976.4,799.2 M1065.1,658.7 L1043.8,771.3 M783.4,662.2 L804.0,774.5 M995.4,815.1 L985.3,937.3 M1086.6,777.5 L1058.0,903.1 M762.5,781.8 L792.4,906.8" stroke="#0e0400" stroke-width="5.0" fill="none" stroke-linecap="butt"/><path d="M865.4,289.4 L856.2,381.5 M867.1,303.1 L854.2,364.5 M859.8,326.9 L861.7,342.3 M854.2,364.5 L845.5,460.5 M856.2,381.5 L843.2,439.9 M848.7,402.2 L850.9,421.0 M843.2,439.9 L833.4,550.6 M845.5,460.5 L830.8,525.5 M837.0,482.7 L839.5,505.6 M830.8,525.5 L819.5,656.3 M833.4,550.6 L816.4,625.4 M823.6,575.4 L826.5,603.5 M816.4,625.4 L804.0,774.5 M819.5,656.3 L800.6,736.5 M808.5,680.9 L811.8,715.4 M800.6,736.5 L792.4,906.8 M804.0,774.5 L788.4,860.0 M865.4,289.4 L867.1,303.1 M854.2,364.5 L856.2,381.5 M843.2,439.9 L845.5,460.5 M830.8,525.5 L833.4,550.6 M816.4,625.4 L819.5,656.3 M800.6,736.5 L804.0,774.5 M788.4,860.0 L792.4,906.8 M979.0,302.0 L988.2,363.1 M977.3,288.3 L990.2,380.1 M984.6,341.0 L982.7,325.7 M990.2,380.1 L998.9,438.2 M988.2,363.1 L1001.2,458.8 M995.7,419.4 L993.5,400.6 M1001.2,458.8 L1011.0,523.4 M998.9,438.2 L1013.6,548.5 M1007.4,503.7 L1004.9,480.8 M1013.6,548.5 L1024.9,622.8 M1011.0,523.4 L1028.0,653.7 M1020.8,601.1 L1017.9,573.1 M1028.0,653.7 L1040.4,733.3 M1024.9,622.8 L1043.8,771.3 M1035.9,712.5 L1032.6,678.1 M1043.8,771.3 L1054.0,856.2 M1040.4,733.3 L1058.0,903.1 M979.0,302.0 L977.3,288.3 M990.2,380.1 L988.2,363.1 M1001.2,458.8 L998.9,438.2 M1013.6,548.5 L1011.0,523.4 M1028.0,653.7 L1024.9,622.8 M1043.8,771.3 L1040.4,733.3 M1058.0,903.1 L1054.0,856.2 M898.9,332.6 L949.7,332.1 M898.0,352.7 L950.9,352.2 M897.0,372.9 L952.0,372.3 M895.1,413.5 L954.3,412.8 M894.1,433.8 L955.5,433.2 M893.1,454.2 L956.6,453.5 M891.0,497.9 L959.1,497.1 M889.9,521.2 L960.5,520.4 M888.8,544.5 L961.8,543.6 M886.3,595.2 L964.7,594.2 M885.0,622.6 L966.2,621.6 M883.7,650.0 L967.8,649.0 M880.9,708.2 L971.1,707.0 M879.4,738.9 L972.9,737.7 M877.9,769.7 L974.6,768.5 M875.0,835.1 L978.6,833.7 M873.6,869.7 L980.8,868.2 M872.2,904.3 L983.1,902.7 M899.9,312.4 L948.6,311.9 M896.0,393.1 L953.2,392.5 M892.1,474.6 L957.8,473.9 M887.7,567.8 L963.1,566.9 M882.4,677.4 L969.4,676.3 M876.4,800.5 L976.4,799.2 M870.8,938.9 L985.3,937.3 M949.7,332.1 L981.8,321.5 M950.9,352.2 L984.6,341.0 M952.0,372.3 L987.4,360.5 M954.3,412.8 L992.9,399.8 M955.5,433.2 L995.7,419.4 M956.6,453.5 L998.4,439.1 M959.1,497.1 L1004.3,481.2 M960.5,520.4 L1007.4,503.7 M961.8,543.6 L1010.5,526.1 M964.7,594.2 L1017.2,574.8 M966.2,621.6 L1020.8,601.1 M967.8,649.0 L1024.4,627.4 M971.1,707.0 L1031.9,683.1 M972.9,737.7 L1035.9,712.5 M974.6,768.5 L1039.9,741.9 M978.6,833.7 L1047.4,804.3 M980.8,868.2 L1050.9,837.2 M983.1,902.7 L1054.4,870.1 M948.6,311.9 L979.0,302.0 M953.2,392.5 L990.2,380.1 M957.8,473.9 L1001.2,458.8 M963.1,566.9 L1013.6,548.5 M969.4,676.3 L1028.0,653.7 M976.4,799.2 L1043.8,771.3 M985.3,937.3 L1058.0,903.1 M864.4,322.7 L898.9,332.6 M861.7,342.3 L898.0,352.7 M858.9,361.9 L897.0,372.9 M853.5,401.2 L895.1,413.5 M850.9,421.0 L894.1,433.8 M848.2,440.7 L893.1,454.2 M842.5,483.0 L891.0,497.9 M839.5,505.6 L889.9,521.2 M836.5,528.1 L888.8,544.5 M829.9,577.0 L886.3,595.2 M826.5,603.5 L885.0,622.6 M823.0,629.9 L883.7,650.0 M815.6,685.9 L880.9,708.2 M811.8,715.4 L879.4,738.9 M807.9,745.0 L877.9,769.7 M867.1,303.1 L899.9,312.4 M856.2,381.5 L896.0,393.1 M845.5,460.5 L892.1,474.6 M833.4,550.6 L887.7,567.8 M819.5,656.3 L882.4,677.4 M804.0,774.5 L876.4,800.5 M867.1,303.1 L804.0,774.5 M899.9,312.4 L870.8,938.9 M948.6,311.9 L985.3,937.3 M979.0,302.0 L1058.0,903.1 M892.1,318.3 L899.9,312.4 M957.9,317.7 L948.6,311.9 M998.9,304.2 L979.0,302.0 M847.8,305.7 L867.1,303.1 M886.9,400.4 L896.0,393.1 M964.0,399.6 L953.2,392.5 M1014.1,382.8 L990.2,380.1 M833.0,384.7 L856.2,381.5 M881.6,483.5 L892.1,474.6 M970.3,482.5 L957.8,473.9 M1028.9,462.1 L1001.2,458.8 M818.6,464.4 L845.5,460.5 M875.5,578.6 L887.7,567.8 M977.5,577.4 L963.1,566.9 M1045.7,552.6 L1013.6,548.5 M802.2,555.4 L833.4,550.6 M868.4,690.7 L882.4,677.4 M985.9,689.2 L969.4,676.3 M1065.1,658.7 L1028.0,653.7 M783.4,662.2 L819.5,656.3 M860.4,816.9 L876.4,800.5 M995.4,815.1 L976.4,799.2 M1086.6,777.5 L1043.8,771.3 M762.5,781.8 L804.0,774.5 M852.3,959.1 L870.8,938.9 M1007.1,956.8 L985.3,937.3 M1105.3,910.6 L1058.0,903.1 M746.5,915.7 L792.4,906.8 M892.1,318.3 L896.0,393.1 M957.9,317.7 L953.2,392.5 M998.9,304.2 L990.2,380.1 M847.8,305.7 L856.2,381.5 M886.9,400.4 L892.1,474.6 M964.0,399.6 L957.8,473.9 M1014.1,382.8 L1001.2,458.8 M833.0,384.7 L845.5,460.5 M881.6,483.5 L887.7,567.8 M970.3,482.5 L963.1,566.9 M1028.9,462.1 L1013.6,548.5 M818.6,464.4 L833.4,550.6 M875.5,578.6 L882.4,677.4 M977.5,577.4 L969.4,676.3 M1045.7,552.6 L1028.0,653.7 M802.2,555.4 L819.5,656.3 M868.4,690.7 L876.4,800.5 M985.9,689.2 L976.4,799.2 M1065.1,658.7 L1043.8,771.3 M783.4,662.2 L804.0,774.5 M995.4,815.1 L985.3,937.3 M1086.6,777.5 L1058.0,903.1 M762.5,781.8 L792.4,906.8" stroke="#582a0e" stroke-width="2.4" fill="none" stroke-linecap="butt"/><g><path d="M929,420 L958,404 L958,411 L929,427 Z" fill="#1a120c" stroke="#0a0604" stroke-width="1"/><path d="M929.0,417.0 V429.0" stroke="#0a0604" stroke-width="1.2"/><path d="M933.8,414.3 V426.3" stroke="#0a0604" stroke-width="1.2"/><path d="M938.7,411.7 V423.7" stroke="#0a0604" stroke-width="1.2"/><path d="M943.5,409.0 V421.0" stroke="#0a0604" stroke-width="1.2"/><path d="M948.3,406.3 V418.3" stroke="#0a0604" stroke-width="1.2"/><path d="M953.2,403.7 V415.7" stroke="#0a0604" stroke-width="1.2"/><path d="M958.0,401.0 V413.0" stroke="#0a0604" stroke-width="1.2"/><path d="M929,416 L958,400" stroke="#241a14" stroke-width="1.3"/><path d="M929,463 L962,446 L962,453 L929,470 Z" fill="#1a120c" stroke="#0a0604" stroke-width="1"/><path d="M929.0,460.0 V472.0" stroke="#0a0604" stroke-width="1.2"/><path d="M934.5,457.2 V469.2" stroke="#0a0604" stroke-width="1.2"/><path d="M940.0,454.3 V466.3" stroke="#0a0604" stroke-width="1.2"/><path d="M945.5,451.5 V463.5" stroke="#0a0604" stroke-width="1.2"/><path d="M951.0,448.7 V460.7" stroke="#0a0604" stroke-width="1.2"/><path d="M956.5,445.8 V457.8" stroke="#0a0604" stroke-width="1.2"/><path d="M962.0,443.0 V455.0" stroke="#0a0604" stroke-width="1.2"/><path d="M929,459 L962,442" stroke="#241a14" stroke-width="1.3"/><path d="M975,506 L993,481 L993,488 L975,513 Z" fill="#1a120c" stroke="#0a0604" stroke-width="1"/><path d="M975.0,503.0 V515.0" stroke="#0a0604" stroke-width="1.2"/><path d="M978.0,498.8 V510.8" stroke="#0a0604" stroke-width="1.2"/><path d="M981.0,494.7 V506.7" stroke="#0a0604" stroke-width="1.2"/><path d="M984.0,490.5 V502.5" stroke="#0a0604" stroke-width="1.2"/><path d="M987.0,486.3 V498.3" stroke="#0a0604" stroke-width="1.2"/><path d="M990.0,482.2 V494.2" stroke="#0a0604" stroke-width="1.2"/><path d="M993.0,478.0 V490.0" stroke="#0a0604" stroke-width="1.2"/><path d="M975,502 L993,477" stroke="#241a14" stroke-width="1.3"/><path d="M980,583 L1001,567 L1001,574 L980,590 Z" fill="#1a120c" stroke="#0a0604" stroke-width="1"/><path d="M980.0,580.0 V592.0" stroke="#0a0604" stroke-width="1.2"/><path d="M983.5,577.3 V589.3" stroke="#0a0604" stroke-width="1.2"/><path d="M987.0,574.7 V586.7" stroke="#0a0604" stroke-width="1.2"/><path d="M990.5,572.0 V584.0" stroke="#0a0604" stroke-width="1.2"/><path d="M994.0,569.3 V581.3" stroke="#0a0604" stroke-width="1.2"/><path d="M997.5,566.7 V578.7" stroke="#0a0604" stroke-width="1.2"/><path d="M1001.0,564.0 V576.0" stroke="#0a0604" stroke-width="1.2"/><path d="M980,579 L1001,563" stroke="#241a14" stroke-width="1.3"/><path d="M929,616 L963,591 L963,598 L929,623 Z" fill="#1a120c" stroke="#0a0604" stroke-width="1"/><path d="M929.0,613.0 V625.0" stroke="#0a0604" stroke-width="1.2"/><path d="M934.7,608.8 V620.8" stroke="#0a0604" stroke-width="1.2"/><path d="M940.3,604.7 V616.7" stroke="#0a0604" stroke-width="1.2"/><path d="M946.0,600.5 V612.5" stroke="#0a0604" stroke-width="1.2"/><path d="M951.7,596.3 V608.3" stroke="#0a0604" stroke-width="1.2"/><path d="M957.3,592.2 V604.2" stroke="#0a0604" stroke-width="1.2"/><path d="M963.0,588.0 V600.0" stroke="#0a0604" stroke-width="1.2"/><path d="M929,612 L963,587" stroke="#241a14" stroke-width="1.3"/><path d="M985,668 L1010,650 L1010,657 L985,675 Z" fill="#1a120c" stroke="#0a0604" stroke-width="1"/><path d="M985.0,665.0 V677.0" stroke="#0a0604" stroke-width="1.2"/><path d="M989.2,662.0 V674.0" stroke="#0a0604" stroke-width="1.2"/><path d="M993.3,659.0 V671.0" stroke="#0a0604" stroke-width="1.2"/><path d="M997.5,656.0 V668.0" stroke="#0a0604" stroke-width="1.2"/><path d="M1001.7,653.0 V665.0" stroke="#0a0604" stroke-width="1.2"/><path d="M1005.8,650.0 V662.0" stroke="#0a0604" stroke-width="1.2"/><path d="M1010.0,647.0 V659.0" stroke="#0a0604" stroke-width="1.2"/><path d="M985,664 L1010,646" stroke="#241a14" stroke-width="1.3"/><path d="M929,733 L972,709 L972,716 L929,740 Z" fill="#1a120c" stroke="#0a0604" stroke-width="1"/><path d="M929.0,730.0 V742.0" stroke="#0a0604" stroke-width="1.2"/><path d="M936.2,726.0 V738.0" stroke="#0a0604" stroke-width="1.2"/><path d="M943.3,722.0 V734.0" stroke="#0a0604" stroke-width="1.2"/><path d="M950.5,718.0 V730.0" stroke="#0a0604" stroke-width="1.2"/><path d="M957.7,714.0 V726.0" stroke="#0a0604" stroke-width="1.2"/><path d="M964.8,710.0 V722.0" stroke="#0a0604" stroke-width="1.2"/><path d="M972.0,706.0 V718.0" stroke="#0a0604" stroke-width="1.2"/><path d="M929,729 L972,705" stroke="#241a14" stroke-width="1.3"/><path d="M1000,836 L1031,811 L1031,818 L1000,843 Z" fill="#1a120c" stroke="#0a0604" stroke-width="1"/><path d="M1000.0,833.0 V845.0" stroke="#0a0604" stroke-width="1.2"/><path d="M1005.2,828.8 V840.8" stroke="#0a0604" stroke-width="1.2"/><path d="M1010.3,824.7 V836.7" stroke="#0a0604" stroke-width="1.2"/><path d="M1015.5,820.5 V832.5" stroke="#0a0604" stroke-width="1.2"/><path d="M1020.7,816.3 V828.3" stroke="#0a0604" stroke-width="1.2"/><path d="M1025.8,812.2 V824.2" stroke="#0a0604" stroke-width="1.2"/><path d="M1031.0,808.0 V820.0" stroke="#0a0604" stroke-width="1.2"/><path d="M1000,832 L1031,807" stroke="#241a14" stroke-width="1.3"/><path d="M962,790 L990,770 L990,777 L962,797 Z" fill="#1a120c" stroke="#0a0604" stroke-width="1"/><path d="M962.0,787.0 V799.0" stroke="#0a0604" stroke-width="1.2"/><path d="M966.7,783.7 V795.7" stroke="#0a0604" stroke-width="1.2"/><path d="M971.3,780.3 V792.3" stroke="#0a0604" stroke-width="1.2"/><path d="M976.0,777.0 V789.0" stroke="#0a0604" stroke-width="1.2"/><path d="M980.7,773.7 V785.7" stroke="#0a0604" stroke-width="1.2"/><path d="M985.3,770.3 V782.3" stroke="#0a0604" stroke-width="1.2"/><path d="M990.0,767.0 V779.0" stroke="#0a0604" stroke-width="1.2"/><path d="M962,786 L990,766" stroke="#241a14" stroke-width="1.3"/></g><path d="M937.0,560.0 L937.0,851.0 M960.0,600.0 L960.0,902.0" stroke="#0a0604" stroke-width="3.6" fill="none" stroke-linecap="butt"/><path d="M937.0,560.0 L937.0,851.0 M960.0,600.0 L960.0,902.0" stroke="#241a12" stroke-width="2.4" fill="none" stroke-linecap="butt"/><path d="M845.5,287.2 L833.0,384.7 M847.8,305.7 L830.3,361.7 M837.9,324.5 L840.4,345.2 M845.5,287.2 L840.4,345.2 M847.8,305.7 L837.9,324.5 M837.9,324.5 L833.0,384.7 M840.4,345.2 L830.3,361.7 M830.3,361.7 L818.6,464.4 M833.0,384.7 L815.5,436.6 M822.9,399.2 L825.8,424.6 M830.3,361.7 L825.8,424.6 M833.0,384.7 L822.9,399.2 M822.9,399.2 L818.6,464.4 M825.8,424.6 L815.5,436.6 M815.5,436.6 L802.2,555.4 M818.6,464.4 L798.7,521.4 M807.1,479.0 L810.4,509.9 M815.5,436.6 L810.4,509.9 M818.6,464.4 L807.1,479.0 M807.1,479.0 L802.2,555.4 M810.4,509.9 L798.7,521.4 M798.7,521.4 L783.4,662.2 M802.2,555.4 L779.3,620.4 M789.0,570.9 L792.8,608.8 M798.7,521.4 L792.8,608.8 M802.2,555.4 L789.0,570.9 M789.0,570.9 L783.4,662.2 M792.8,608.8 L779.3,620.4 M779.3,620.4 L762.5,781.8 M783.4,662.2 L757.8,730.4 M768.5,675.4 L773.0,722.0 M779.3,620.4 L773.0,722.0 M783.4,662.2 L768.5,675.4 M768.5,675.4 L762.5,781.8 M773.0,722.0 L757.8,730.4 M757.8,730.4 L746.5,915.7 M762.5,781.8 L741.1,852.4 M749.4,791.4 L754.5,848.8 M757.8,730.4 L754.5,848.8 M762.5,781.8 L749.4,791.4 M749.4,791.4 L746.5,915.7 M754.5,848.8 L741.1,852.4 M845.5,287.2 L847.8,305.7 M830.3,361.7 L833.0,384.7 M815.5,436.6 L818.6,464.4 M798.7,521.4 L802.2,555.4 M779.3,620.4 L783.4,662.2 M757.8,730.4 L762.5,781.8 M741.1,852.4 L746.5,915.7 M998.9,304.2 L1011.4,359.9 M996.6,285.7 L1014.1,382.8 M1006.5,343.5 L1004.0,322.8 M998.9,304.2 L1004.0,322.8 M996.6,285.7 L1006.5,343.5 M1006.5,343.5 L1011.4,359.9 M1004.0,322.8 L1014.1,382.8 M1014.1,382.8 L1025.8,434.3 M1011.4,359.9 L1028.9,462.1 M1021.5,422.5 L1018.6,397.1 M1014.1,382.8 L1018.6,397.1 M1011.4,359.9 L1021.5,422.5 M1021.5,422.5 L1025.8,434.3 M1018.6,397.1 L1028.9,462.1 M1028.9,462.1 L1042.2,518.6 M1025.8,434.3 L1045.7,552.6 M1037.3,507.3 L1034.0,476.4 M1028.9,462.1 L1034.0,476.4 M1025.8,434.3 L1037.3,507.3 M1037.3,507.3 L1042.2,518.6 M1034.0,476.4 L1045.7,552.6 M1045.7,552.6 L1061.0,616.9 M1042.2,518.6 L1065.1,658.7 M1055.4,605.6 L1051.6,567.8 M1045.7,552.6 L1051.6,567.8 M1042.2,518.6 L1055.4,605.6 M1055.4,605.6 L1061.0,616.9 M1051.6,567.8 L1065.1,658.7 M1065.1,658.7 L1081.9,726.1 M1061.0,616.9 L1086.6,777.5 M1075.9,718.1 L1071.4,671.5 M1065.1,658.7 L1071.4,671.5 M1061.0,616.9 L1075.9,718.1 M1075.9,718.1 L1081.9,726.1 M1071.4,671.5 L1086.6,777.5 M1086.6,777.5 L1099.9,847.3 M1081.9,726.1 L1105.3,910.6 M1096.0,844.0 L1090.9,786.7 M1086.6,777.5 L1090.9,786.7 M1081.9,726.1 L1096.0,844.0 M1096.0,844.0 L1099.9,847.3 M1090.9,786.7 L1105.3,910.6 M998.9,304.2 L996.6,285.7 M1014.1,382.8 L1011.4,359.9 M1028.9,462.1 L1025.8,434.3 M1045.7,552.6 L1042.2,518.6 M1065.1,658.7 L1061.0,616.9 M1086.6,777.5 L1081.9,726.1 M1105.3,910.6 L1099.9,847.3" stroke="#0e0400" stroke-width="5.2" fill="none" stroke-linecap="butt"/><path d="M845.5,287.2 L833.0,384.7 M847.8,305.7 L830.3,361.7 M837.9,324.5 L840.4,345.2 M845.5,287.2 L840.4,345.2 M847.8,305.7 L837.9,324.5 M837.9,324.5 L833.0,384.7 M840.4,345.2 L830.3,361.7 M830.3,361.7 L818.6,464.4 M833.0,384.7 L815.5,436.6 M822.9,399.2 L825.8,424.6 M830.3,361.7 L825.8,424.6 M833.0,384.7 L822.9,399.2 M822.9,399.2 L818.6,464.4 M825.8,424.6 L815.5,436.6 M815.5,436.6 L802.2,555.4 M818.6,464.4 L798.7,521.4 M807.1,479.0 L810.4,509.9 M815.5,436.6 L810.4,509.9 M818.6,464.4 L807.1,479.0 M807.1,479.0 L802.2,555.4 M810.4,509.9 L798.7,521.4 M798.7,521.4 L783.4,662.2 M802.2,555.4 L779.3,620.4 M789.0,570.9 L792.8,608.8 M798.7,521.4 L792.8,608.8 M802.2,555.4 L789.0,570.9 M789.0,570.9 L783.4,662.2 M792.8,608.8 L779.3,620.4 M779.3,620.4 L762.5,781.8 M783.4,662.2 L757.8,730.4 M768.5,675.4 L773.0,722.0 M779.3,620.4 L773.0,722.0 M783.4,662.2 L768.5,675.4 M768.5,675.4 L762.5,781.8 M773.0,722.0 L757.8,730.4 M757.8,730.4 L746.5,915.7 M762.5,781.8 L741.1,852.4 M749.4,791.4 L754.5,848.8 M757.8,730.4 L754.5,848.8 M762.5,781.8 L749.4,791.4 M749.4,791.4 L746.5,915.7 M754.5,848.8 L741.1,852.4 M845.5,287.2 L847.8,305.7 M830.3,361.7 L833.0,384.7 M815.5,436.6 L818.6,464.4 M798.7,521.4 L802.2,555.4 M779.3,620.4 L783.4,662.2 M757.8,730.4 L762.5,781.8 M741.1,852.4 L746.5,915.7 M998.9,304.2 L1011.4,359.9 M996.6,285.7 L1014.1,382.8 M1006.5,343.5 L1004.0,322.8 M998.9,304.2 L1004.0,322.8 M996.6,285.7 L1006.5,343.5 M1006.5,343.5 L1011.4,359.9 M1004.0,322.8 L1014.1,382.8 M1014.1,382.8 L1025.8,434.3 M1011.4,359.9 L1028.9,462.1 M1021.5,422.5 L1018.6,397.1 M1014.1,382.8 L1018.6,397.1 M1011.4,359.9 L1021.5,422.5 M1021.5,422.5 L1025.8,434.3 M1018.6,397.1 L1028.9,462.1 M1028.9,462.1 L1042.2,518.6 M1025.8,434.3 L1045.7,552.6 M1037.3,507.3 L1034.0,476.4 M1028.9,462.1 L1034.0,476.4 M1025.8,434.3 L1037.3,507.3 M1037.3,507.3 L1042.2,518.6 M1034.0,476.4 L1045.7,552.6 M1045.7,552.6 L1061.0,616.9 M1042.2,518.6 L1065.1,658.7 M1055.4,605.6 L1051.6,567.8 M1045.7,552.6 L1051.6,567.8 M1042.2,518.6 L1055.4,605.6 M1055.4,605.6 L1061.0,616.9 M1051.6,567.8 L1065.1,658.7 M1065.1,658.7 L1081.9,726.1 M1061.0,616.9 L1086.6,777.5 M1075.9,718.1 L1071.4,671.5 M1065.1,658.7 L1071.4,671.5 M1061.0,616.9 L1075.9,718.1 M1075.9,718.1 L1081.9,726.1 M1071.4,671.5 L1086.6,777.5 M1086.6,777.5 L1099.9,847.3 M1081.9,726.1 L1105.3,910.6 M1096.0,844.0 L1090.9,786.7 M1086.6,777.5 L1090.9,786.7 M1081.9,726.1 L1096.0,844.0 M1096.0,844.0 L1099.9,847.3 M1090.9,786.7 L1105.3,910.6 M998.9,304.2 L996.6,285.7 M1014.1,382.8 L1011.4,359.9 M1028.9,462.1 L1025.8,434.3 M1045.7,552.6 L1042.2,518.6 M1065.1,658.7 L1061.0,616.9 M1086.6,777.5 L1081.9,726.1 M1105.3,910.6 L1099.9,847.3" stroke="#582a0e" stroke-width="2.6" fill="none" stroke-linecap="butt"/><path d="M892.1,318.3 L964.0,399.6 M957.9,317.7 L886.9,400.4 M886.9,400.4 L970.3,482.5 M964.0,399.6 L881.6,483.5 M881.6,483.5 L977.5,577.4 M970.3,482.5 L875.5,578.6 M875.5,578.6 L985.9,689.2 M977.5,577.4 L868.4,690.7 M868.4,690.7 L995.4,815.1 M985.9,689.2 L860.4,816.9 M860.4,816.9 L1007.1,956.8 M995.4,815.1 L852.3,959.1" stroke="#0e0400" stroke-width="3.8" fill="none" stroke-linecap="butt"/><path d="M892.1,318.3 L964.0,399.6 M957.9,317.7 L886.9,400.4 M886.9,400.4 L970.3,482.5 M964.0,399.6 L881.6,483.5 M881.6,483.5 L977.5,577.4 M970.3,482.5 L875.5,578.6 M875.5,578.6 L985.9,689.2 M977.5,577.4 L868.4,690.7 M868.4,690.7 L995.4,815.1 M985.9,689.2 L860.4,816.9 M860.4,816.9 L1007.1,956.8 M995.4,815.1 L852.3,959.1" stroke="#582a0e" stroke-width="1.6" fill="none" stroke-linecap="butt"/><path d="M889.5,359.3 L961.0,358.6 M884.2,441.9 L967.2,441.0 M878.5,531.0 L973.9,529.9 M872.0,634.6 L981.7,633.3 M864.4,753.8 L990.7,752.2 M856.3,888.0 L1001.3,886.0" stroke="#0e0400" stroke-width="3.2" fill="none" stroke-linecap="butt"/><path d="M889.5,359.3 L961.0,358.6 M884.2,441.9 L967.2,441.0 M878.5,531.0 L973.9,529.9 M872.0,634.6 L981.7,633.3 M864.4,753.8 L990.7,752.2 M856.3,888.0 L1001.3,886.0" stroke="#582a0e" stroke-width="1.4" fill="none" stroke-linecap="butt"/><path d="M847.8,305.7 L886.9,400.4 M892.1,318.3 L833.0,384.7 M840.4,345.2 L889.5,359.3 M847.8,305.7 L889.5,359.3 M892.1,318.3 L840.4,345.2 M840.4,345.2 L886.9,400.4 M889.5,359.3 L833.0,384.7 M833.0,384.7 L881.6,483.5 M886.9,400.4 L818.6,464.4 M825.8,424.6 L884.2,441.9 M833.0,384.7 L884.2,441.9 M886.9,400.4 L825.8,424.6 M825.8,424.6 L881.6,483.5 M884.2,441.9 L818.6,464.4 M818.6,464.4 L875.5,578.6 M881.6,483.5 L802.2,555.4 M810.4,509.9 L878.5,531.0 M818.6,464.4 L878.5,531.0 M881.6,483.5 L810.4,509.9 M810.4,509.9 L875.5,578.6 M878.5,531.0 L802.2,555.4 M802.2,555.4 L868.4,690.7 M875.5,578.6 L783.4,662.2 M792.8,608.8 L872.0,634.6 M802.2,555.4 L872.0,634.6 M875.5,578.6 L792.8,608.8 M792.8,608.8 L868.4,690.7 M872.0,634.6 L783.4,662.2 M783.4,662.2 L860.4,816.9 M868.4,690.7 L762.5,781.8 M773.0,722.0 L864.4,753.8 M783.4,662.2 L864.4,753.8 M868.4,690.7 L773.0,722.0 M773.0,722.0 L860.4,816.9 M864.4,753.8 L762.5,781.8 M957.9,317.7 L1014.1,382.8 M998.9,304.2 L964.0,399.6 M961.0,358.6 L1006.5,343.5 M957.9,317.7 L1006.5,343.5 M998.9,304.2 L961.0,358.6 M961.0,358.6 L1014.1,382.8 M1006.5,343.5 L964.0,399.6 M964.0,399.6 L1028.9,462.1 M1014.1,382.8 L970.3,482.5 M967.2,441.0 L1021.5,422.5 M964.0,399.6 L1021.5,422.5 M1014.1,382.8 L967.2,441.0 M967.2,441.0 L1028.9,462.1 M1021.5,422.5 L970.3,482.5 M970.3,482.5 L1045.7,552.6 M1028.9,462.1 L977.5,577.4 M973.9,529.9 L1037.3,507.3 M970.3,482.5 L1037.3,507.3 M1028.9,462.1 L973.9,529.9 M973.9,529.9 L1045.7,552.6 M1037.3,507.3 L977.5,577.4 M977.5,577.4 L1065.1,658.7 M1045.7,552.6 L985.9,689.2 M981.7,633.3 L1055.4,605.6 M977.5,577.4 L1055.4,605.6 M1045.7,552.6 L981.7,633.3 M981.7,633.3 L1065.1,658.7 M1055.4,605.6 L985.9,689.2 M985.9,689.2 L1086.6,777.5 M1065.1,658.7 L995.4,815.1 M990.7,752.2 L1075.9,718.1 M985.9,689.2 L1075.9,718.1 M1065.1,658.7 L990.7,752.2 M990.7,752.2 L1086.6,777.5 M1075.9,718.1 L995.4,815.1 M995.4,815.1 L1105.3,910.6 M1086.6,777.5 L1007.1,956.8 M1001.3,886.0 L1096.0,844.0 M995.4,815.1 L1096.0,844.0 M1086.6,777.5 L1001.3,886.0 M1001.3,886.0 L1105.3,910.6 M1096.0,844.0 L1007.1,956.8 M746.5,915.7 L792.4,906.8 M792.4,906.8 L795.7,869.8 M804.0,774.5 L795.7,869.8 M795.7,869.8 L852.3,959.1 M746.5,915.7 L795.7,869.8 M755.3,842.1 L792.4,906.8 M762.5,781.8 L795.7,869.8 M795.7,869.8 L857.4,869.8" stroke="#0e0400" stroke-width="5.0" fill="none" stroke-linecap="butt"/><path d="M847.8,305.7 L886.9,400.4 M892.1,318.3 L833.0,384.7 M840.4,345.2 L889.5,359.3 M847.8,305.7 L889.5,359.3 M892.1,318.3 L840.4,345.2 M840.4,345.2 L886.9,400.4 M889.5,359.3 L833.0,384.7 M833.0,384.7 L881.6,483.5 M886.9,400.4 L818.6,464.4 M825.8,424.6 L884.2,441.9 M833.0,384.7 L884.2,441.9 M886.9,400.4 L825.8,424.6 M825.8,424.6 L881.6,483.5 M884.2,441.9 L818.6,464.4 M818.6,464.4 L875.5,578.6 M881.6,483.5 L802.2,555.4 M810.4,509.9 L878.5,531.0 M818.6,464.4 L878.5,531.0 M881.6,483.5 L810.4,509.9 M810.4,509.9 L875.5,578.6 M878.5,531.0 L802.2,555.4 M802.2,555.4 L868.4,690.7 M875.5,578.6 L783.4,662.2 M792.8,608.8 L872.0,634.6 M802.2,555.4 L872.0,634.6 M875.5,578.6 L792.8,608.8 M792.8,608.8 L868.4,690.7 M872.0,634.6 L783.4,662.2 M783.4,662.2 L860.4,816.9 M868.4,690.7 L762.5,781.8 M773.0,722.0 L864.4,753.8 M783.4,662.2 L864.4,753.8 M868.4,690.7 L773.0,722.0 M773.0,722.0 L860.4,816.9 M864.4,753.8 L762.5,781.8 M957.9,317.7 L1014.1,382.8 M998.9,304.2 L964.0,399.6 M961.0,358.6 L1006.5,343.5 M957.9,317.7 L1006.5,343.5 M998.9,304.2 L961.0,358.6 M961.0,358.6 L1014.1,382.8 M1006.5,343.5 L964.0,399.6 M964.0,399.6 L1028.9,462.1 M1014.1,382.8 L970.3,482.5 M967.2,441.0 L1021.5,422.5 M964.0,399.6 L1021.5,422.5 M1014.1,382.8 L967.2,441.0 M967.2,441.0 L1028.9,462.1 M1021.5,422.5 L970.3,482.5 M970.3,482.5 L1045.7,552.6 M1028.9,462.1 L977.5,577.4 M973.9,529.9 L1037.3,507.3 M970.3,482.5 L1037.3,507.3 M1028.9,462.1 L973.9,529.9 M973.9,529.9 L1045.7,552.6 M1037.3,507.3 L977.5,577.4 M977.5,577.4 L1065.1,658.7 M1045.7,552.6 L985.9,689.2 M981.7,633.3 L1055.4,605.6 M977.5,577.4 L1055.4,605.6 M1045.7,552.6 L981.7,633.3 M981.7,633.3 L1065.1,658.7 M1055.4,605.6 L985.9,689.2 M985.9,689.2 L1086.6,777.5 M1065.1,658.7 L995.4,815.1 M990.7,752.2 L1075.9,718.1 M985.9,689.2 L1075.9,718.1 M1065.1,658.7 L990.7,752.2 M990.7,752.2 L1086.6,777.5 M1075.9,718.1 L995.4,815.1 M995.4,815.1 L1105.3,910.6 M1086.6,777.5 L1007.1,956.8 M1001.3,886.0 L1096.0,844.0 M995.4,815.1 L1096.0,844.0 M1086.6,777.5 L1001.3,886.0 M1001.3,886.0 L1105.3,910.6 M1096.0,844.0 L1007.1,956.8 M746.5,915.7 L792.4,906.8 M792.4,906.8 L795.7,869.8 M804.0,774.5 L795.7,869.8 M795.7,869.8 L852.3,959.1 M746.5,915.7 L795.7,869.8 M755.3,842.1 L792.4,906.8 M762.5,781.8 L795.7,869.8 M795.7,869.8 L857.4,869.8" stroke="#582a0e" stroke-width="2.4" fill="none" stroke-linecap="butt"/><path d="M847.8,305.7 L892.1,318.3 M833.0,384.7 L886.9,400.4 M818.6,464.4 L881.6,483.5 M802.2,555.4 L875.5,578.6 M783.4,662.2 L868.4,690.7 M762.5,781.8 L860.4,816.9 M892.1,318.3 L957.9,317.7 M886.9,400.4 L964.0,399.6 M881.6,483.5 L970.3,482.5 M875.5,578.6 L977.5,577.4 M868.4,690.7 L985.9,689.2 M860.4,816.9 L995.4,815.1 M852.3,959.1 L1007.1,956.8 M957.9,317.7 L998.9,304.2 M964.0,399.6 L1014.1,382.8 M970.3,482.5 L1028.9,462.1 M977.5,577.4 L1045.7,552.6 M985.9,689.2 L1065.1,658.7 M995.4,815.1 L1086.6,777.5 M1007.1,956.8 L1105.3,910.6" stroke="#0e0400" stroke-width="6.4" fill="none" stroke-linecap="butt"/><path d="M847.8,305.7 L892.1,318.3 M833.0,384.7 L886.9,400.4 M818.6,464.4 L881.6,483.5 M802.2,555.4 L875.5,578.6 M783.4,662.2 L868.4,690.7 M762.5,781.8 L860.4,816.9 M892.1,318.3 L957.9,317.7 M886.9,400.4 L964.0,399.6 M881.6,483.5 L970.3,482.5 M875.5,578.6 L977.5,577.4 M868.4,690.7 L985.9,689.2 M860.4,816.9 L995.4,815.1 M852.3,959.1 L1007.1,956.8 M957.9,317.7 L998.9,304.2 M964.0,399.6 L1014.1,382.8 M970.3,482.5 L1028.9,462.1 M977.5,577.4 L1045.7,552.6 M985.9,689.2 L1065.1,658.7 M995.4,815.1 L1086.6,777.5 M1007.1,956.8 L1105.3,910.6" stroke="#6c340e" stroke-width="3.4" fill="none" stroke-linecap="butt"/><path d="M846.6,296.4 L831.7,373.2 M831.7,373.2 L817.0,450.5 M817.0,450.5 L800.5,538.4 M800.5,538.4 L781.3,641.3 M781.3,641.3 L760.2,756.1 M760.2,756.1 L743.8,884.1 M997.8,294.9 L1012.7,371.3 M1012.7,371.3 L1027.4,448.2 M1027.4,448.2 L1043.9,535.6 M1043.9,535.6 L1063.1,637.8 M1063.1,637.8 L1084.2,751.8 M1084.2,751.8 L1102.6,879.0" stroke="#0e0400" stroke-width="7.8" fill="none" stroke-linecap="butt"/><path d="M846.6,296.4 L831.7,373.2 M831.7,373.2 L817.0,450.5 M817.0,450.5 L800.5,538.4 M800.5,538.4 L781.3,641.3 M781.3,641.3 L760.2,756.1 M760.2,756.1 L743.8,884.1 M997.8,294.9 L1012.7,371.3 M1012.7,371.3 L1027.4,448.2 M1027.4,448.2 L1043.9,535.6 M1043.9,535.6 L1063.1,637.8 M1063.1,637.8 L1084.2,751.8 M1084.2,751.8 L1102.6,879.0" stroke="#52280e" stroke-width="4.0" fill="none" stroke-linecap="butt"/><path d="M892.1,318.3 L886.9,400.4 M886.9,400.4 L881.6,483.5 M881.6,483.5 L875.5,578.6 M875.5,578.6 L868.4,690.7 M868.4,690.7 L860.4,816.9 M860.4,816.9 L852.3,959.1 M957.9,317.7 L964.0,399.6 M964.0,399.6 L970.3,482.5 M970.3,482.5 L977.5,577.4 M977.5,577.4 L985.9,689.2 M985.9,689.2 L995.4,815.1 M995.4,815.1 L1007.1,956.8" stroke="#0e0400" stroke-width="7.6" fill="none" stroke-linecap="butt"/><path d="M892.1,318.3 L886.9,400.4 M886.9,400.4 L881.6,483.5 M881.6,483.5 L875.5,578.6 M875.5,578.6 L868.4,690.7 M868.4,690.7 L860.4,816.9 M860.4,816.9 L852.3,959.1 M957.9,317.7 L964.0,399.6 M964.0,399.6 L970.3,482.5 M970.3,482.5 L977.5,577.4 M977.5,577.4 L985.9,689.2 M985.9,689.2 L995.4,815.1 M995.4,815.1 L1007.1,956.8" stroke="#703610" stroke-width="4.4" fill="none" stroke-linecap="butt"/><path d="M891.1,318.3 L885.9,400.4 M885.9,400.4 L880.6,483.5 M880.6,483.5 L874.5,578.6 M874.5,578.6 L867.4,690.7 M867.4,690.7 L859.4,816.9 M859.4,816.9 L851.3,959.1 M956.9,317.7 L963.0,399.6 M963.0,399.6 L969.3,482.5 M969.3,482.5 L976.5,577.4 M976.5,577.4 L984.9,689.2 M984.9,689.2 L994.4,815.1 M994.4,815.1 L1006.1,956.8" stroke="#b8602a" stroke-width="1.0" fill="none" stroke-linecap="butt"/><path d="M866.3,303.1 L855.4,381.5 M855.4,381.5 L844.7,460.5 M844.7,460.5 L832.6,550.6 M832.6,550.6 L818.7,656.3 M818.7,656.3 L803.2,774.5 M803.2,774.5 L791.6,906.8 M899.1,312.4 L895.2,393.1 M895.2,393.1 L891.3,474.6 M891.3,474.6 L886.9,567.8 M886.9,567.8 L881.6,677.4 M881.6,677.4 L875.6,800.5 M875.6,800.5 L870.0,938.9 M947.8,311.9 L952.4,392.5 M952.4,392.5 L957.0,473.9 M957.0,473.9 L962.3,566.9 M962.3,566.9 L968.6,676.3 M968.6,676.3 L975.6,799.2 M975.6,799.2 L984.5,937.3 M978.2,302.0 L989.4,380.1 M989.4,380.1 L1000.4,458.8 M1000.4,458.8 L1012.8,548.5 M1012.8,548.5 L1027.2,653.7 M1027.2,653.7 L1043.0,771.3 M1043.0,771.3 L1057.2,903.1" stroke="#e07028" stroke-width="1.2" fill="none" stroke-dasharray="7 34"/><rect x="878.6" y="480.0" width="6" height="7" fill="#8a8c96" stroke="#202024" stroke-width="1"/><rect x="967.3" y="479.0" width="6" height="7" fill="#8a8c96" stroke="#202024" stroke-width="1"/><circle cx="929.5" cy="531.0" r="3" fill="#1a1008"/><rect x="872.5" y="575.1" width="6" height="7" fill="#8a8c96" stroke="#202024" stroke-width="1"/><rect x="974.5" y="573.9" width="6" height="7" fill="#8a8c96" stroke="#202024" stroke-width="1"/><circle cx="930.7" cy="634.6" r="3" fill="#1a1008"/><rect x="865.4" y="687.2" width="6" height="7" fill="#8a8c96" stroke="#202024" stroke-width="1"/><rect x="982.9" y="685.7" width="6" height="7" fill="#8a8c96" stroke="#202024" stroke-width="1"/><circle cx="931.9" cy="753.8" r="3" fill="#1a1008"/><rect x="857.4" y="813.4" width="6" height="7" fill="#8a8c96" stroke="#202024" stroke-width="1"/><rect x="992.4" y="811.6" width="6" height="7" fill="#8a8c96" stroke="#202024" stroke-width="1"/><circle cx="933.7" cy="888.0" r="3" fill="#1a1008"/>
<path d="M893.3,114.3 L885.6,115.9 L878.0,118.0 L870.6,120.5 L863.2,123.4 L856.1,126.7 L849.1,130.3 L842.3,134.3 L835.7,138.6 L829.4,143.2 L823.3,148.1 L817.5,153.2 L812.0,158.6 L806.8,164.2 L801.9,169.5 L797.3,175.0 L793.1,180.7 L789.2,186.6 L785.7,192.6 L782.5,198.8 L779.8,205.2 L777.4,211.7 L775.4,218.2 L773.9,224.9 L772.7,231.6 L771.9,238.4 L771.6,245.2 L771.6,247.4 L772.6,261.0 L774.6,274.5 L778.5,287.1 L784.5,297.8 L791.5,306.7 L800.5,314.6 L809.4,320.6 L816.4,323.1 L822.4,321.8 L826.4,317.1 L827.4,310.4 L826.4,303.6 M894.2,113.6 L886.7,115.1 L879.4,117.0 L872.1,119.3 L865.0,122.0 L858.1,125.1 L851.3,128.5 L844.7,132.3 L838.3,136.5 L832.2,140.9 L826.3,145.7 L820.7,150.7 L815.3,156.0 L810.3,161.4 L805.5,166.4 L801.1,171.6 L797.0,177.0 L793.2,182.5 L789.8,188.3 L786.8,194.2 L784.1,200.2 L781.8,206.3 L779.9,212.5 L778.4,218.9 L777.2,225.3 L776.5,231.7 L776.2,238.3 L776.1,240.4 L777.1,254.0 L779.0,267.6 L782.9,280.4 L788.7,291.4 L795.5,300.6 L804.2,308.9 L812.9,315.3 L819.6,318.2 L825.4,317.2 L829.3,312.7 L830.2,306.0 L829.3,299.2 M895.9,112.9 L888.9,114.2 L882.0,116.0 L875.2,118.1 L868.5,120.6 L862.0,123.6 L855.7,126.8 L849.5,130.5 L843.5,134.5 L837.7,138.8 L832.2,143.4 L826.9,148.3 L821.9,153.4 L817.2,158.7 L812.7,163.4 L808.5,168.3 L804.7,173.4 L801.2,178.7 L798.0,184.1 L795.1,189.7 L792.6,195.4 L790.4,201.2 L788.7,207.1 L787.2,213.1 L786.2,219.3 L785.5,225.4 L785.2,231.7 L785.1,233.8 L786.1,247.4 L787.9,261.1 L791.5,274.1 L796.9,285.3 L803.3,294.8 L811.4,303.5 L819.6,310.3 L825.9,313.5 L831.4,312.8 L835.0,308.4 L835.9,301.8 L835.0,294.9 M898.4,112.3 L892.1,113.4 L885.8,115.0 L879.7,117.0 L873.7,119.4 L867.8,122.2 L862.0,125.3 L856.5,128.8 L851.1,132.7 L845.8,136.8 L840.9,141.3 L836.1,146.1 L831.5,151.1 L827.2,156.2 L823.2,160.7 L819.5,165.4 L816.0,170.2 L812.8,175.2 L809.9,180.3 L807.3,185.6 L805.0,191.0 L803.1,196.5 L801.5,202.1 L800.2,207.9 L799.2,213.7 L798.6,219.6 L798.3,225.6 L798.3,227.6 L799.1,241.3 L800.8,255.0 L804.0,268.2 L809.0,279.7 L814.7,289.5 L822.1,298.6 L829.4,305.7 L835.2,309.2 L840.1,308.7 L843.4,304.5 L844.2,297.9 L843.4,291.0 M901.6,111.8 L896.2,112.8 L890.8,114.2 L885.5,116.0 L880.3,118.3 L875.2,120.9 L870.2,123.9 L865.4,127.3 L860.8,131.0 L856.3,135.1 L852.0,139.5 L847.8,144.1 L843.9,149.0 L840.2,154.0 L836.7,158.3 L833.5,162.7 L830.5,167.3 L827.7,172.0 L825.2,176.9 L823.0,181.9 L821.0,187.1 L819.4,192.3 L818.0,197.7 L816.8,203.2 L816.0,208.8 L815.5,214.5 L815.2,220.2 L815.2,222.2 L815.9,235.8 L817.3,249.7 L820.2,263.0 L824.4,274.7 L829.4,284.7 L835.7,294.2 L842.1,301.7 L847.0,305.4 L851.3,305.1 L854.1,301.0 L854.8,294.5 L854.1,287.6 M905.5,111.3 L901.0,112.2 L896.7,113.5 L892.4,115.2 L888.2,117.4 L884.0,119.9 L880.0,122.8 L876.1,126.1 L872.3,129.7 L868.7,133.6 L865.2,137.9 L861.8,142.5 L858.7,147.3 L855.7,152.2 L852.8,156.3 L850.2,160.5 L847.8,164.9 L845.5,169.4 L843.5,174.1 L841.7,178.9 L840.1,183.8 L838.7,188.8 L837.6,194.0 L836.7,199.3 L836.0,204.7 L835.6,210.1 L835.4,215.7 L835.4,217.6 L836.0,231.3 L837.1,245.2 L839.4,258.6 L842.8,270.6 L846.9,280.8 L852.0,290.5 L857.2,298.2 L861.2,302.2 L864.6,302.1 L866.9,298.1 L867.5,291.6 L866.9,284.7 M909.8,111.0 L906.6,111.7 L903.3,113.0 L900.2,114.6 L897.1,116.6 L894.0,119.1 L891.1,121.9 L888.2,125.1 L885.4,128.6 L882.7,132.5 L880.1,136.7 L877.7,141.2 L875.3,146.0 L873.1,150.8 L871.0,154.7 L869.1,158.8 L867.3,163.0 L865.7,167.4 L864.2,171.9 L862.8,176.5 L861.7,181.2 L860.7,186.1 L859.8,191.1 L859.2,196.2 L858.7,201.4 L858.3,206.8 L858.2,212.2 L858.2,214.0 L858.6,227.8 L859.5,241.7 L861.1,255.2 L863.7,267.3 L866.6,277.7 L870.4,287.6 L874.2,295.6 L877.2,299.7 L879.7,299.7 L881.4,295.9 L881.9,289.4 L881.4,282.4 M914.5,110.7 L912.5,111.4 L910.6,112.6 L908.6,114.2 L906.7,116.1 L904.9,118.5 L903.1,121.3 L901.3,124.4 L899.6,127.9 L897.9,131.7 L896.4,135.9 L894.9,140.3 L893.4,145.0 L892.1,149.8 L890.8,153.6 L889.6,157.6 L888.5,161.7 L887.5,166.0 L886.6,170.3 L885.8,174.9 L885.0,179.5 L884.4,184.3 L883.9,189.1 L883.5,194.1 L883.2,199.3 L883.0,204.5 L882.9,209.8 L882.9,211.6 L883.2,225.4 L883.7,239.4 L884.7,252.9 L886.3,265.1 L888.1,275.6 L890.4,285.6 L892.8,293.8 L894.6,298.0 L896.1,298.1 L897.2,294.3 L897.4,287.9 L897.2,280.9 M919.5,110.6 L918.8,111.3 L918.2,112.4 L917.5,113.9 L916.9,115.9 L916.2,118.2 L915.6,121.0 L915.0,124.1 L914.5,127.5 L913.9,131.3 L913.4,135.4 L912.9,139.9 L912.4,144.6 L911.9,149.3 L911.5,153.1 L911.1,157.0 L910.7,161.1 L910.4,165.2 L910.1,169.6 L909.8,174.0 L909.6,178.6 L909.3,183.3 L909.2,188.1 L909.0,193.1 L908.9,198.1 L908.9,203.3 L908.8,208.6 L908.8,210.4 L908.9,224.1 L909.1,238.2 L909.4,251.8 L910.0,264.0 L910.6,274.5 L911.4,284.6 L912.2,292.8 L912.8,297.1 L913.3,297.3 L913.6,293.6 L913.7,287.1 L913.6,280.1 M924.5,110.6 L925.2,111.3 L925.8,112.4 L926.5,113.9 L927.1,115.9 L927.8,118.2 L928.4,121.0 L929.0,124.1 L929.5,127.5 L930.1,131.3 L930.6,135.4 L931.1,139.9 L931.6,144.6 L932.1,149.3 L932.5,153.1 L932.9,157.0 L933.3,161.1 L933.6,165.2 L933.9,169.6 L934.2,174.0 L934.4,178.6 L934.7,183.3 L934.8,188.1 L935.0,193.1 L935.1,198.1 L935.1,203.3 L935.2,208.6 L935.2,210.4 L935.1,224.1 L934.9,238.2 L934.6,251.8 L934.0,264.0 L933.4,274.5 L932.6,284.6 L931.8,292.8 L931.2,297.1 L930.7,297.3 L930.4,293.6 L930.3,287.1 L930.4,280.1 M929.5,110.7 L931.5,111.4 L933.4,112.6 L935.4,114.2 L937.3,116.1 L939.1,118.5 L940.9,121.3 L942.7,124.4 L944.4,127.9 L946.1,131.7 L947.6,135.9 L949.1,140.3 L950.6,145.0 L951.9,149.8 L953.2,153.6 L954.4,157.6 L955.5,161.7 L956.5,166.0 L957.4,170.3 L958.2,174.9 L959.0,179.5 L959.6,184.3 L960.1,189.1 L960.5,194.1 L960.8,199.3 L961.0,204.5 L961.1,209.8 L961.1,211.6 L960.8,225.4 L960.3,239.4 L959.3,252.9 L957.7,265.1 L955.9,275.6 L953.6,285.6 L951.2,293.8 L949.4,298.0 L947.9,298.1 L946.8,294.3 L946.6,287.9 L946.8,280.9 M934.2,111.0 L937.4,111.7 L940.7,113.0 L943.8,114.6 L946.9,116.6 L950.0,119.1 L952.9,121.9 L955.8,125.1 L958.6,128.6 L961.3,132.5 L963.9,136.7 L966.3,141.2 L968.7,146.0 L970.9,150.8 L973.0,154.7 L974.9,158.8 L976.7,163.0 L978.3,167.4 L979.8,171.9 L981.2,176.5 L982.3,181.2 L983.3,186.1 L984.2,191.1 L984.8,196.2 L985.3,201.4 L985.7,206.8 L985.8,212.2 L985.8,214.0 L985.4,227.8 L984.5,241.7 L982.9,255.2 L980.3,267.3 L977.4,277.7 L973.6,287.6 L969.8,295.6 L966.8,299.7 L964.3,299.7 L962.6,295.9 L962.1,289.4 L962.6,282.4 M938.5,111.3 L943.0,112.2 L947.3,113.5 L951.6,115.2 L955.8,117.4 L960.0,119.9 L964.0,122.8 L967.9,126.1 L971.7,129.7 L975.3,133.6 L978.8,137.9 L982.2,142.5 L985.3,147.3 L988.3,152.2 L991.2,156.3 L993.8,160.5 L996.2,164.9 L998.5,169.4 L1000.5,174.1 L1002.3,178.9 L1003.9,183.8 L1005.3,188.8 L1006.4,194.0 L1007.3,199.3 L1008.0,204.7 L1008.4,210.1 L1008.6,215.7 L1008.6,217.6 L1008.0,231.3 L1006.9,245.2 L1004.6,258.6 L1001.2,270.6 L997.1,280.8 L992.0,290.5 L986.8,298.2 L982.8,302.2 L979.4,302.1 L977.1,298.1 L976.5,291.6 L977.1,284.7 M942.4,111.8 L947.8,112.8 L953.2,114.2 L958.5,116.0 L963.7,118.3 L968.8,120.9 L973.8,123.9 L978.6,127.3 L983.2,131.0 L987.7,135.1 L992.0,139.5 L996.2,144.1 L1000.1,149.0 L1003.8,154.0 L1007.3,158.3 L1010.5,162.7 L1013.5,167.3 L1016.3,172.0 L1018.8,176.9 L1021.0,181.9 L1023.0,187.1 L1024.6,192.3 L1026.0,197.7 L1027.2,203.2 L1028.0,208.8 L1028.5,214.5 L1028.8,220.2 L1028.8,222.2 L1028.1,235.8 L1026.7,249.7 L1023.8,263.0 L1019.6,274.7 L1014.6,284.7 L1008.3,294.2 L1001.9,301.7 L997.0,305.4 L992.7,305.1 L989.9,301.0 L989.2,294.5 L989.9,287.6 M945.6,112.3 L951.9,113.4 L958.2,115.0 L964.3,117.0 L970.3,119.4 L976.2,122.2 L982.0,125.3 L987.5,128.8 L992.9,132.7 L998.2,136.8 L1003.1,141.3 L1007.9,146.1 L1012.5,151.1 L1016.8,156.2 L1020.8,160.7 L1024.5,165.4 L1028.0,170.2 L1031.2,175.2 L1034.1,180.3 L1036.7,185.6 L1039.0,191.0 L1040.9,196.5 L1042.5,202.1 L1043.8,207.9 L1044.8,213.7 L1045.4,219.6 L1045.7,225.6 L1045.7,227.6 L1044.9,241.3 L1043.2,255.0 L1040.0,268.2 L1035.0,279.7 L1029.3,289.5 L1021.9,298.6 L1014.6,305.7 L1008.8,309.2 L1003.9,308.7 L1000.6,304.5 L999.8,297.9 L1000.6,291.0 M948.1,112.9 L955.1,114.2 L962.0,116.0 L968.8,118.1 L975.5,120.6 L982.0,123.6 L988.3,126.8 L994.5,130.5 L1000.5,134.5 L1006.3,138.8 L1011.8,143.4 L1017.1,148.3 L1022.1,153.4 L1026.8,158.7 L1031.3,163.4 L1035.5,168.3 L1039.3,173.4 L1042.8,178.7 L1046.0,184.1 L1048.9,189.7 L1051.4,195.4 L1053.6,201.2 L1055.3,207.1 L1056.8,213.1 L1057.8,219.3 L1058.5,225.4 L1058.8,231.7 L1058.9,233.8 L1057.9,247.4 L1056.1,261.1 L1052.5,274.1 L1047.1,285.3 L1040.7,294.8 L1032.6,303.5 L1024.4,310.3 L1018.1,313.5 L1012.6,312.8 L1009.0,308.4 L1008.1,301.8 L1009.0,294.9 M949.8,113.6 L957.3,115.1 L964.6,117.0 L971.9,119.3 L979.0,122.0 L985.9,125.1 L992.7,128.5 L999.3,132.3 L1005.7,136.5 L1011.8,140.9 L1017.7,145.7 L1023.3,150.7 L1028.7,156.0 L1033.7,161.4 L1038.5,166.4 L1042.9,171.6 L1047.0,177.0 L1050.8,182.5 L1054.2,188.3 L1057.2,194.2 L1059.9,200.2 L1062.2,206.3 L1064.1,212.5 L1065.6,218.9 L1066.8,225.3 L1067.5,231.7 L1067.8,238.3 L1067.9,240.4 L1066.9,254.0 L1065.0,267.6 L1061.1,280.4 L1055.3,291.4 L1048.5,300.6 L1039.8,308.9 L1031.1,315.3 L1024.4,318.2 L1018.6,317.2 L1014.7,312.7 L1013.8,306.0 L1014.7,299.2 M950.7,114.3 L958.4,115.9 L966.0,118.0 L973.4,120.5 L980.8,123.4 L987.9,126.7 L994.9,130.3 L1001.7,134.3 L1008.3,138.6 L1014.6,143.2 L1020.7,148.1 L1026.5,153.2 L1032.0,158.6 L1037.2,164.2 L1042.1,169.5 L1046.7,175.0 L1050.9,180.7 L1054.8,186.6 L1058.3,192.6 L1061.5,198.8 L1064.2,205.2 L1066.6,211.7 L1068.6,218.2 L1070.1,224.9 L1071.3,231.6 L1072.1,238.4 L1072.4,245.2 L1072.4,247.4 L1071.4,261.0 L1069.4,274.5 L1065.5,287.1 L1059.5,297.8 L1052.5,306.7 L1043.5,314.6 L1034.6,320.6 L1027.6,323.1 L1021.6,321.8 L1017.6,317.1 L1016.6,310.4 L1017.6,303.6" stroke="#16161a" stroke-width="3.6" fill="none" stroke-linejoin="round"/><path d="M893.3,114.3 L885.6,115.9 L878.0,118.0 L870.6,120.5 L863.2,123.4 L856.1,126.7 L849.1,130.3 L842.3,134.3 L835.7,138.6 L829.4,143.2 L823.3,148.1 L817.5,153.2 L812.0,158.6 L806.8,164.2 L801.9,169.5 L797.3,175.0 L793.1,180.7 L789.2,186.6 L785.7,192.6 L782.5,198.8 L779.8,205.2 L777.4,211.7 L775.4,218.2 L773.9,224.9 L772.7,231.6 L771.9,238.4 L771.6,245.2 L771.6,247.4 L772.6,261.0 L774.6,274.5 L778.5,287.1 L784.5,297.8 L791.5,306.7 L800.5,314.6 L809.4,320.6 L816.4,323.1 L822.4,321.8 L826.4,317.1 L827.4,310.4 L826.4,303.6 M894.2,113.6 L886.7,115.1 L879.4,117.0 L872.1,119.3 L865.0,122.0 L858.1,125.1 L851.3,128.5 L844.7,132.3 L838.3,136.5 L832.2,140.9 L826.3,145.7 L820.7,150.7 L815.3,156.0 L810.3,161.4 L805.5,166.4 L801.1,171.6 L797.0,177.0 L793.2,182.5 L789.8,188.3 L786.8,194.2 L784.1,200.2 L781.8,206.3 L779.9,212.5 L778.4,218.9 L777.2,225.3 L776.5,231.7 L776.2,238.3 L776.1,240.4 L777.1,254.0 L779.0,267.6 L782.9,280.4 L788.7,291.4 L795.5,300.6 L804.2,308.9 L812.9,315.3 L819.6,318.2 L825.4,317.2 L829.3,312.7 L830.2,306.0 L829.3,299.2 M895.9,112.9 L888.9,114.2 L882.0,116.0 L875.2,118.1 L868.5,120.6 L862.0,123.6 L855.7,126.8 L849.5,130.5 L843.5,134.5 L837.7,138.8 L832.2,143.4 L826.9,148.3 L821.9,153.4 L817.2,158.7 L812.7,163.4 L808.5,168.3 L804.7,173.4 L801.2,178.7 L798.0,184.1 L795.1,189.7 L792.6,195.4 L790.4,201.2 L788.7,207.1 L787.2,213.1 L786.2,219.3 L785.5,225.4 L785.2,231.7 L785.1,233.8 L786.1,247.4 L787.9,261.1 L791.5,274.1 L796.9,285.3 L803.3,294.8 L811.4,303.5 L819.6,310.3 L825.9,313.5 L831.4,312.8 L835.0,308.4 L835.9,301.8 L835.0,294.9 M898.4,112.3 L892.1,113.4 L885.8,115.0 L879.7,117.0 L873.7,119.4 L867.8,122.2 L862.0,125.3 L856.5,128.8 L851.1,132.7 L845.8,136.8 L840.9,141.3 L836.1,146.1 L831.5,151.1 L827.2,156.2 L823.2,160.7 L819.5,165.4 L816.0,170.2 L812.8,175.2 L809.9,180.3 L807.3,185.6 L805.0,191.0 L803.1,196.5 L801.5,202.1 L800.2,207.9 L799.2,213.7 L798.6,219.6 L798.3,225.6 L798.3,227.6 L799.1,241.3 L800.8,255.0 L804.0,268.2 L809.0,279.7 L814.7,289.5 L822.1,298.6 L829.4,305.7 L835.2,309.2 L840.1,308.7 L843.4,304.5 L844.2,297.9 L843.4,291.0 M901.6,111.8 L896.2,112.8 L890.8,114.2 L885.5,116.0 L880.3,118.3 L875.2,120.9 L870.2,123.9 L865.4,127.3 L860.8,131.0 L856.3,135.1 L852.0,139.5 L847.8,144.1 L843.9,149.0 L840.2,154.0 L836.7,158.3 L833.5,162.7 L830.5,167.3 L827.7,172.0 L825.2,176.9 L823.0,181.9 L821.0,187.1 L819.4,192.3 L818.0,197.7 L816.8,203.2 L816.0,208.8 L815.5,214.5 L815.2,220.2 L815.2,222.2 L815.9,235.8 L817.3,249.7 L820.2,263.0 L824.4,274.7 L829.4,284.7 L835.7,294.2 L842.1,301.7 L847.0,305.4 L851.3,305.1 L854.1,301.0 L854.8,294.5 L854.1,287.6 M905.5,111.3 L901.0,112.2 L896.7,113.5 L892.4,115.2 L888.2,117.4 L884.0,119.9 L880.0,122.8 L876.1,126.1 L872.3,129.7 L868.7,133.6 L865.2,137.9 L861.8,142.5 L858.7,147.3 L855.7,152.2 L852.8,156.3 L850.2,160.5 L847.8,164.9 L845.5,169.4 L843.5,174.1 L841.7,178.9 L840.1,183.8 L838.7,188.8 L837.6,194.0 L836.7,199.3 L836.0,204.7 L835.6,210.1 L835.4,215.7 L835.4,217.6 L836.0,231.3 L837.1,245.2 L839.4,258.6 L842.8,270.6 L846.9,280.8 L852.0,290.5 L857.2,298.2 L861.2,302.2 L864.6,302.1 L866.9,298.1 L867.5,291.6 L866.9,284.7 M909.8,111.0 L906.6,111.7 L903.3,113.0 L900.2,114.6 L897.1,116.6 L894.0,119.1 L891.1,121.9 L888.2,125.1 L885.4,128.6 L882.7,132.5 L880.1,136.7 L877.7,141.2 L875.3,146.0 L873.1,150.8 L871.0,154.7 L869.1,158.8 L867.3,163.0 L865.7,167.4 L864.2,171.9 L862.8,176.5 L861.7,181.2 L860.7,186.1 L859.8,191.1 L859.2,196.2 L858.7,201.4 L858.3,206.8 L858.2,212.2 L858.2,214.0 L858.6,227.8 L859.5,241.7 L861.1,255.2 L863.7,267.3 L866.6,277.7 L870.4,287.6 L874.2,295.6 L877.2,299.7 L879.7,299.7 L881.4,295.9 L881.9,289.4 L881.4,282.4 M914.5,110.7 L912.5,111.4 L910.6,112.6 L908.6,114.2 L906.7,116.1 L904.9,118.5 L903.1,121.3 L901.3,124.4 L899.6,127.9 L897.9,131.7 L896.4,135.9 L894.9,140.3 L893.4,145.0 L892.1,149.8 L890.8,153.6 L889.6,157.6 L888.5,161.7 L887.5,166.0 L886.6,170.3 L885.8,174.9 L885.0,179.5 L884.4,184.3 L883.9,189.1 L883.5,194.1 L883.2,199.3 L883.0,204.5 L882.9,209.8 L882.9,211.6 L883.2,225.4 L883.7,239.4 L884.7,252.9 L886.3,265.1 L888.1,275.6 L890.4,285.6 L892.8,293.8 L894.6,298.0 L896.1,298.1 L897.2,294.3 L897.4,287.9 L897.2,280.9 M919.5,110.6 L918.8,111.3 L918.2,112.4 L917.5,113.9 L916.9,115.9 L916.2,118.2 L915.6,121.0 L915.0,124.1 L914.5,127.5 L913.9,131.3 L913.4,135.4 L912.9,139.9 L912.4,144.6 L911.9,149.3 L911.5,153.1 L911.1,157.0 L910.7,161.1 L910.4,165.2 L910.1,169.6 L909.8,174.0 L909.6,178.6 L909.3,183.3 L909.2,188.1 L909.0,193.1 L908.9,198.1 L908.9,203.3 L908.8,208.6 L908.8,210.4 L908.9,224.1 L909.1,238.2 L909.4,251.8 L910.0,264.0 L910.6,274.5 L911.4,284.6 L912.2,292.8 L912.8,297.1 L913.3,297.3 L913.6,293.6 L913.7,287.1 L913.6,280.1 M924.5,110.6 L925.2,111.3 L925.8,112.4 L926.5,113.9 L927.1,115.9 L927.8,118.2 L928.4,121.0 L929.0,124.1 L929.5,127.5 L930.1,131.3 L930.6,135.4 L931.1,139.9 L931.6,144.6 L932.1,149.3 L932.5,153.1 L932.9,157.0 L933.3,161.1 L933.6,165.2 L933.9,169.6 L934.2,174.0 L934.4,178.6 L934.7,183.3 L934.8,188.1 L935.0,193.1 L935.1,198.1 L935.1,203.3 L935.2,208.6 L935.2,210.4 L935.1,224.1 L934.9,238.2 L934.6,251.8 L934.0,264.0 L933.4,274.5 L932.6,284.6 L931.8,292.8 L931.2,297.1 L930.7,297.3 L930.4,293.6 L930.3,287.1 L930.4,280.1 M929.5,110.7 L931.5,111.4 L933.4,112.6 L935.4,114.2 L937.3,116.1 L939.1,118.5 L940.9,121.3 L942.7,124.4 L944.4,127.9 L946.1,131.7 L947.6,135.9 L949.1,140.3 L950.6,145.0 L951.9,149.8 L953.2,153.6 L954.4,157.6 L955.5,161.7 L956.5,166.0 L957.4,170.3 L958.2,174.9 L959.0,179.5 L959.6,184.3 L960.1,189.1 L960.5,194.1 L960.8,199.3 L961.0,204.5 L961.1,209.8 L961.1,211.6 L960.8,225.4 L960.3,239.4 L959.3,252.9 L957.7,265.1 L955.9,275.6 L953.6,285.6 L951.2,293.8 L949.4,298.0 L947.9,298.1 L946.8,294.3 L946.6,287.9 L946.8,280.9 M934.2,111.0 L937.4,111.7 L940.7,113.0 L943.8,114.6 L946.9,116.6 L950.0,119.1 L952.9,121.9 L955.8,125.1 L958.6,128.6 L961.3,132.5 L963.9,136.7 L966.3,141.2 L968.7,146.0 L970.9,150.8 L973.0,154.7 L974.9,158.8 L976.7,163.0 L978.3,167.4 L979.8,171.9 L981.2,176.5 L982.3,181.2 L983.3,186.1 L984.2,191.1 L984.8,196.2 L985.3,201.4 L985.7,206.8 L985.8,212.2 L985.8,214.0 L985.4,227.8 L984.5,241.7 L982.9,255.2 L980.3,267.3 L977.4,277.7 L973.6,287.6 L969.8,295.6 L966.8,299.7 L964.3,299.7 L962.6,295.9 L962.1,289.4 L962.6,282.4 M938.5,111.3 L943.0,112.2 L947.3,113.5 L951.6,115.2 L955.8,117.4 L960.0,119.9 L964.0,122.8 L967.9,126.1 L971.7,129.7 L975.3,133.6 L978.8,137.9 L982.2,142.5 L985.3,147.3 L988.3,152.2 L991.2,156.3 L993.8,160.5 L996.2,164.9 L998.5,169.4 L1000.5,174.1 L1002.3,178.9 L1003.9,183.8 L1005.3,188.8 L1006.4,194.0 L1007.3,199.3 L1008.0,204.7 L1008.4,210.1 L1008.6,215.7 L1008.6,217.6 L1008.0,231.3 L1006.9,245.2 L1004.6,258.6 L1001.2,270.6 L997.1,280.8 L992.0,290.5 L986.8,298.2 L982.8,302.2 L979.4,302.1 L977.1,298.1 L976.5,291.6 L977.1,284.7 M942.4,111.8 L947.8,112.8 L953.2,114.2 L958.5,116.0 L963.7,118.3 L968.8,120.9 L973.8,123.9 L978.6,127.3 L983.2,131.0 L987.7,135.1 L992.0,139.5 L996.2,144.1 L1000.1,149.0 L1003.8,154.0 L1007.3,158.3 L1010.5,162.7 L1013.5,167.3 L1016.3,172.0 L1018.8,176.9 L1021.0,181.9 L1023.0,187.1 L1024.6,192.3 L1026.0,197.7 L1027.2,203.2 L1028.0,208.8 L1028.5,214.5 L1028.8,220.2 L1028.8,222.2 L1028.1,235.8 L1026.7,249.7 L1023.8,263.0 L1019.6,274.7 L1014.6,284.7 L1008.3,294.2 L1001.9,301.7 L997.0,305.4 L992.7,305.1 L989.9,301.0 L989.2,294.5 L989.9,287.6 M945.6,112.3 L951.9,113.4 L958.2,115.0 L964.3,117.0 L970.3,119.4 L976.2,122.2 L982.0,125.3 L987.5,128.8 L992.9,132.7 L998.2,136.8 L1003.1,141.3 L1007.9,146.1 L1012.5,151.1 L1016.8,156.2 L1020.8,160.7 L1024.5,165.4 L1028.0,170.2 L1031.2,175.2 L1034.1,180.3 L1036.7,185.6 L1039.0,191.0 L1040.9,196.5 L1042.5,202.1 L1043.8,207.9 L1044.8,213.7 L1045.4,219.6 L1045.7,225.6 L1045.7,227.6 L1044.9,241.3 L1043.2,255.0 L1040.0,268.2 L1035.0,279.7 L1029.3,289.5 L1021.9,298.6 L1014.6,305.7 L1008.8,309.2 L1003.9,308.7 L1000.6,304.5 L999.8,297.9 L1000.6,291.0 M948.1,112.9 L955.1,114.2 L962.0,116.0 L968.8,118.1 L975.5,120.6 L982.0,123.6 L988.3,126.8 L994.5,130.5 L1000.5,134.5 L1006.3,138.8 L1011.8,143.4 L1017.1,148.3 L1022.1,153.4 L1026.8,158.7 L1031.3,163.4 L1035.5,168.3 L1039.3,173.4 L1042.8,178.7 L1046.0,184.1 L1048.9,189.7 L1051.4,195.4 L1053.6,201.2 L1055.3,207.1 L1056.8,213.1 L1057.8,219.3 L1058.5,225.4 L1058.8,231.7 L1058.9,233.8 L1057.9,247.4 L1056.1,261.1 L1052.5,274.1 L1047.1,285.3 L1040.7,294.8 L1032.6,303.5 L1024.4,310.3 L1018.1,313.5 L1012.6,312.8 L1009.0,308.4 L1008.1,301.8 L1009.0,294.9 M949.8,113.6 L957.3,115.1 L964.6,117.0 L971.9,119.3 L979.0,122.0 L985.9,125.1 L992.7,128.5 L999.3,132.3 L1005.7,136.5 L1011.8,140.9 L1017.7,145.7 L1023.3,150.7 L1028.7,156.0 L1033.7,161.4 L1038.5,166.4 L1042.9,171.6 L1047.0,177.0 L1050.8,182.5 L1054.2,188.3 L1057.2,194.2 L1059.9,200.2 L1062.2,206.3 L1064.1,212.5 L1065.6,218.9 L1066.8,225.3 L1067.5,231.7 L1067.8,238.3 L1067.9,240.4 L1066.9,254.0 L1065.0,267.6 L1061.1,280.4 L1055.3,291.4 L1048.5,300.6 L1039.8,308.9 L1031.1,315.3 L1024.4,318.2 L1018.6,317.2 L1014.7,312.7 L1013.8,306.0 L1014.7,299.2 M950.7,114.3 L958.4,115.9 L966.0,118.0 L973.4,120.5 L980.8,123.4 L987.9,126.7 L994.9,130.3 L1001.7,134.3 L1008.3,138.6 L1014.6,143.2 L1020.7,148.1 L1026.5,153.2 L1032.0,158.6 L1037.2,164.2 L1042.1,169.5 L1046.7,175.0 L1050.9,180.7 L1054.8,186.6 L1058.3,192.6 L1061.5,198.8 L1064.2,205.2 L1066.6,211.7 L1068.6,218.2 L1070.1,224.9 L1071.3,231.6 L1072.1,238.4 L1072.4,245.2 L1072.4,247.4 L1071.4,261.0 L1069.4,274.5 L1065.5,287.1 L1059.5,297.8 L1052.5,306.7 L1043.5,314.6 L1034.6,320.6 L1027.6,323.1 L1021.6,321.8 L1017.6,317.1 L1016.6,310.4 L1017.6,303.6" stroke="#70707a" stroke-width="0.9" fill="none" stroke-linejoin="round"/><path d="M950.8,114.6 L950.8,114.9 L950.6,115.2 L950.3,115.4 L949.8,115.7 L949.3,115.9 L948.6,116.2 L947.8,116.4 L947.0,116.6 L946.0,116.9 L944.9,117.1 L943.7,117.3 L942.4,117.5 L941.0,117.7 L939.5,117.8 L938.0,118.0 L936.4,118.1 L934.7,118.3 L933.0,118.4 L931.3,118.5 L929.5,118.5 L927.6,118.6 L925.8,118.6 L923.9,118.7 L922.0,118.7 L920.1,118.7 L918.2,118.6 L916.4,118.6 L914.5,118.5 L912.7,118.5 L911.0,118.4 L909.3,118.3 L907.6,118.1 L906.0,118.0 L904.5,117.8 L903.0,117.7 L901.6,117.5 L900.3,117.3 L899.1,117.1 L898.0,116.9 L897.0,116.6 L896.2,116.4 L895.4,116.2 L894.7,115.9 L894.2,115.7 L893.7,115.4 L893.4,115.2 L893.2,114.9 L893.2,114.6 L893.2,114.4 L893.4,114.1 L893.7,113.8 L894.2,113.6 L894.7,113.3 L895.4,113.1 L896.2,112.8 L897.0,112.6 L898.0,112.4 L899.1,112.2 L900.3,112.0 L901.6,111.8 L903.0,111.6 L904.5,111.4 L906.0,111.3 L907.6,111.1 L909.3,111.0 L911.0,110.9 L912.7,110.8 L914.5,110.7 L916.4,110.7 L918.2,110.6 L920.1,110.6 L922.0,110.6 L923.9,110.6 L925.8,110.6 L927.6,110.7 L929.5,110.7 L931.3,110.8 L933.0,110.9 L934.7,111.0 L936.4,111.1 L938.0,111.3 L939.5,111.4 L941.0,111.6 L942.4,111.8 L943.7,112.0 L944.9,112.2 L946.0,112.4 L947.0,112.6 L947.8,112.8 L948.6,113.1 L949.3,113.3 L949.8,113.6 L950.3,113.8 L950.6,114.1 L950.8,114.4 L950.8,114.6" stroke="#141416" stroke-width="4.2" fill="none"/><path d="M950.8,114.6 L950.8,114.9 L950.6,115.2 L950.3,115.4 L949.8,115.7 L949.3,115.9 L948.6,116.2 L947.8,116.4 L947.0,116.6 L946.0,116.9 L944.9,117.1 L943.7,117.3 L942.4,117.5 L941.0,117.7 L939.5,117.8 L938.0,118.0 L936.4,118.1 L934.7,118.3 L933.0,118.4 L931.3,118.5 L929.5,118.5 L927.6,118.6 L925.8,118.6 L923.9,118.7 L922.0,118.7 L920.1,118.7 L918.2,118.6 L916.4,118.6 L914.5,118.5 L912.7,118.5 L911.0,118.4 L909.3,118.3 L907.6,118.1 L906.0,118.0 L904.5,117.8 L903.0,117.7 L901.6,117.5 L900.3,117.3 L899.1,117.1 L898.0,116.9 L897.0,116.6 L896.2,116.4 L895.4,116.2 L894.7,115.9 L894.2,115.7 L893.7,115.4 L893.4,115.2 L893.2,114.9 L893.2,114.6 L893.2,114.4 L893.4,114.1 L893.7,113.8 L894.2,113.6 L894.7,113.3 L895.4,113.1 L896.2,112.8 L897.0,112.6 L898.0,112.4 L899.1,112.2 L900.3,112.0 L901.6,111.8 L903.0,111.6 L904.5,111.4 L906.0,111.3 L907.6,111.1 L909.3,111.0 L911.0,110.9 L912.7,110.8 L914.5,110.7 L916.4,110.7 L918.2,110.6 L920.1,110.6 L922.0,110.6 L923.9,110.6 L925.8,110.6 L927.6,110.7 L929.5,110.7 L931.3,110.8 L933.0,110.9 L934.7,111.0 L936.4,111.1 L938.0,111.3 L939.5,111.4 L941.0,111.6 L942.4,111.8 L943.7,112.0 L944.9,112.2 L946.0,112.4 L947.0,112.6 L947.8,112.8 L948.6,113.1 L949.3,113.3 L949.8,113.6 L950.3,113.8 L950.6,114.1 L950.8,114.4 L950.8,114.6" stroke="#808086" stroke-width="1.8" fill="none"/><path d="M846.5,132.5 L846.7,131.8 L847.1,131.1 L848.0,130.4 L849.1,129.8 L850.5,129.1 L852.2,128.4 L854.3,127.8 L856.6,127.2 L859.2,126.6 L862.1,126.1 L865.2,125.5 L868.6,125.0 L872.2,124.5 L876.0,124.1 L880.1,123.7 L884.2,123.3 L888.6,123.0 L893.1,122.7 L897.7,122.5 L902.5,122.3 L907.3,122.1 L912.1,122.0 L917.1,121.9 L922.0,121.9 L926.9,121.9 L931.9,122.0 L936.7,122.1 L941.5,122.3 L946.3,122.5 L950.9,122.7 L955.4,123.0 L959.8,123.3 L963.9,123.7 L968.0,124.1 L971.8,124.5 L975.4,125.0 L978.8,125.5 L981.9,126.1 L984.8,126.6 L987.4,127.2 L989.7,127.8 L991.8,128.4 L993.5,129.1 L994.9,129.8 L996.0,130.4 L996.9,131.1 L997.3,131.8 L997.5,132.5" stroke="#141416" stroke-width="4.2" fill="none"/><path d="M846.5,132.5 L846.7,131.8 L847.1,131.1 L848.0,130.4 L849.1,129.8 L850.5,129.1 L852.2,128.4 L854.3,127.8 L856.6,127.2 L859.2,126.6 L862.1,126.1 L865.2,125.5 L868.6,125.0 L872.2,124.5 L876.0,124.1 L880.1,123.7 L884.2,123.3 L888.6,123.0 L893.1,122.7 L897.7,122.5 L902.5,122.3 L907.3,122.1 L912.1,122.0 L917.1,121.9 L922.0,121.9 L926.9,121.9 L931.9,122.0 L936.7,122.1 L941.5,122.3 L946.3,122.5 L950.9,122.7 L955.4,123.0 L959.8,123.3 L963.9,123.7 L968.0,124.1 L971.8,124.5 L975.4,125.0 L978.8,125.5 L981.9,126.1 L984.8,126.6 L987.4,127.2 L989.7,127.8 L991.8,128.4 L993.5,129.1 L994.9,129.8 L996.0,130.4 L996.9,131.1 L997.3,131.8 L997.5,132.5" stroke="#6a5a44" stroke-width="1.8" fill="none"/><rect x="845.2" y="129.8" width="3.2" height="3.6" fill="#7a5a38" stroke="#1a1208" stroke-width="0.6"/><rect x="847.5" y="128.0" width="3.2" height="3.6" fill="#7a5a38" stroke="#1a1208" stroke-width="0.6"/><rect x="852.0" y="126.2" width="3.2" height="3.6" fill="#7a5a38" stroke="#1a1208" stroke-width="0.6"/><rect x="858.6" y="124.6" width="3.2" height="3.6" fill="#7a5a38" stroke="#1a1208" stroke-width="0.6"/><rect x="867.0" y="123.2" width="3.2" height="3.6" fill="#7a5a38" stroke="#1a1208" stroke-width="0.6"/><rect x="877.1" y="122.0" width="3.2" height="3.6" fill="#7a5a38" stroke="#1a1208" stroke-width="0.6"/><rect x="888.5" y="121.1" width="3.2" height="3.6" fill="#7a5a38" stroke="#1a1208" stroke-width="0.6"/><rect x="900.9" y="120.5" width="3.2" height="3.6" fill="#7a5a38" stroke="#1a1208" stroke-width="0.6"/><rect x="913.8" y="120.2" width="3.2" height="3.6" fill="#7a5a38" stroke="#1a1208" stroke-width="0.6"/><rect x="927.0" y="120.2" width="3.2" height="3.6" fill="#7a5a38" stroke="#1a1208" stroke-width="0.6"/><rect x="939.9" y="120.5" width="3.2" height="3.6" fill="#7a5a38" stroke="#1a1208" stroke-width="0.6"/><rect x="952.3" y="121.1" width="3.2" height="3.6" fill="#7a5a38" stroke="#1a1208" stroke-width="0.6"/><rect x="963.7" y="122.0" width="3.2" height="3.6" fill="#7a5a38" stroke="#1a1208" stroke-width="0.6"/><rect x="973.8" y="123.2" width="3.2" height="3.6" fill="#7a5a38" stroke="#1a1208" stroke-width="0.6"/><rect x="982.2" y="124.6" width="3.2" height="3.6" fill="#7a5a38" stroke="#1a1208" stroke-width="0.6"/><rect x="988.8" y="126.2" width="3.2" height="3.6" fill="#7a5a38" stroke="#1a1208" stroke-width="0.6"/><rect x="993.3" y="128.0" width="3.2" height="3.6" fill="#7a5a38" stroke="#1a1208" stroke-width="0.6"/><rect x="995.6" y="129.8" width="3.2" height="3.6" fill="#7a5a38" stroke="#1a1208" stroke-width="0.6"/><path d="M806.3,165.6 L806.6,164.5 L807.3,163.5 L808.5,162.4 L810.3,161.4 L812.5,160.3 L815.1,159.3 L818.3,158.4 L821.8,157.4 L825.8,156.5 L830.2,155.6 L835.0,154.8 L840.2,154.0 L845.7,153.3 L851.6,152.6 L857.7,152.0 L864.2,151.4 L870.8,150.9 L877.7,150.5 L884.8,150.1 L892.1,149.8 L899.4,149.6 L906.9,149.4 L914.4,149.3 L922.0,149.2 L929.6,149.3 L937.1,149.4 L944.6,149.6 L951.9,149.8 L959.2,150.1 L966.3,150.5 L973.2,150.9 L979.8,151.4 L986.3,152.0 L992.4,152.6 L998.3,153.3 L1003.8,154.0 L1009.0,154.8 L1013.8,155.6 L1018.2,156.5 L1022.2,157.4 L1025.7,158.4 L1028.9,159.3 L1031.5,160.3 L1033.7,161.4 L1035.5,162.4 L1036.7,163.5 L1037.4,164.5 L1037.7,165.6" stroke="#141416" stroke-width="4.2" fill="none"/><path d="M806.3,165.6 L806.6,164.5 L807.3,163.5 L808.5,162.4 L810.3,161.4 L812.5,160.3 L815.1,159.3 L818.3,158.4 L821.8,157.4 L825.8,156.5 L830.2,155.6 L835.0,154.8 L840.2,154.0 L845.7,153.3 L851.6,152.6 L857.7,152.0 L864.2,151.4 L870.8,150.9 L877.7,150.5 L884.8,150.1 L892.1,149.8 L899.4,149.6 L906.9,149.4 L914.4,149.3 L922.0,149.2 L929.6,149.3 L937.1,149.4 L944.6,149.6 L951.9,149.8 L959.2,150.1 L966.3,150.5 L973.2,150.9 L979.8,151.4 L986.3,152.0 L992.4,152.6 L998.3,153.3 L1003.8,154.0 L1009.0,154.8 L1013.8,155.6 L1018.2,156.5 L1022.2,157.4 L1025.7,158.4 L1028.9,159.3 L1031.5,160.3 L1033.7,161.4 L1035.5,162.4 L1036.7,163.5 L1037.4,164.5 L1037.7,165.6" stroke="#6a5a44" stroke-width="1.8" fill="none"/><rect x="805.2" y="162.4" width="3.2" height="3.6" fill="#7a5a38" stroke="#1a1208" stroke-width="0.6"/><rect x="808.7" y="159.6" width="3.2" height="3.6" fill="#7a5a38" stroke="#1a1208" stroke-width="0.6"/><rect x="815.6" y="156.9" width="3.2" height="3.6" fill="#7a5a38" stroke="#1a1208" stroke-width="0.6"/><rect x="825.6" y="154.4" width="3.2" height="3.6" fill="#7a5a38" stroke="#1a1208" stroke-width="0.6"/><rect x="838.6" y="152.2" width="3.2" height="3.6" fill="#7a5a38" stroke="#1a1208" stroke-width="0.6"/><rect x="854.1" y="150.4" width="3.2" height="3.6" fill="#7a5a38" stroke="#1a1208" stroke-width="0.6"/><rect x="871.5" y="149.0" width="3.2" height="3.6" fill="#7a5a38" stroke="#1a1208" stroke-width="0.6"/><rect x="890.5" y="148.0" width="3.2" height="3.6" fill="#7a5a38" stroke="#1a1208" stroke-width="0.6"/><rect x="910.3" y="147.5" width="3.2" height="3.6" fill="#7a5a38" stroke="#1a1208" stroke-width="0.6"/><rect x="930.5" y="147.5" width="3.2" height="3.6" fill="#7a5a38" stroke="#1a1208" stroke-width="0.6"/><rect x="950.3" y="148.0" width="3.2" height="3.6" fill="#7a5a38" stroke="#1a1208" stroke-width="0.6"/><rect x="969.3" y="149.0" width="3.2" height="3.6" fill="#7a5a38" stroke="#1a1208" stroke-width="0.6"/><rect x="986.7" y="150.4" width="3.2" height="3.6" fill="#7a5a38" stroke="#1a1208" stroke-width="0.6"/><rect x="1002.2" y="152.2" width="3.2" height="3.6" fill="#7a5a38" stroke="#1a1208" stroke-width="0.6"/><rect x="1015.2" y="154.4" width="3.2" height="3.6" fill="#7a5a38" stroke="#1a1208" stroke-width="0.6"/><rect x="1025.2" y="156.9" width="3.2" height="3.6" fill="#7a5a38" stroke="#1a1208" stroke-width="0.6"/><rect x="1032.1" y="159.6" width="3.2" height="3.6" fill="#7a5a38" stroke="#1a1208" stroke-width="0.6"/><rect x="1035.6" y="162.4" width="3.2" height="3.6" fill="#7a5a38" stroke="#1a1208" stroke-width="0.6"/><path d="M1023.6,166.4 L1023.6,230.4 M1023.6,179.3 L1035.1,260.6 M1019.8,169.6 L1019.8,226.5 M1011.1,172.5 L1011.1,221.8 M1011.1,186.3 L1027.1,274.0 M997.9,175.2 L997.9,245.1 M980.9,177.3 L980.9,238.8 M980.9,191.7 L998.2,285.2 M961.0,178.9 L961.0,231.2 M939.1,179.8 L939.1,252.8 M939.1,194.5 L954.2,291.9 M916.3,179.9 L916.3,242.9 M893.8,179.4 L893.8,232.0 M893.8,194.1 L903.9,292.8 M872.8,178.2 L872.8,250.1 M854.2,176.3 L854.2,237.2 M854.2,190.6 L857.1,287.7 M839.0,173.9 L839.0,223.8 M828.0,171.1 L828.0,238.2 M828.0,184.7 L823.2,277.6 M821.6,168.0 L821.6,224.0 M820.4,164.8 L820.4,210.2 M820.4,177.5 L808.9,264.5 M824.2,161.6 L824.2,222.3 M832.9,158.6 L832.9,209.2 M832.9,170.5 L816.9,251.1 M846.1,156.0 L846.1,197.1 M863.1,153.9 L863.1,209.3 M863.1,165.1 L845.8,239.9 M883.0,152.3 L883.0,199.2 M904.9,151.4 L904.9,190.3 M904.9,162.3 L889.8,233.2 M927.7,151.2 L927.7,204.9 M950.2,151.8 L950.2,198.3 M950.2,162.7 L940.1,232.3 M971.2,153.0 L971.2,192.7 M989.8,154.9 L989.8,211.0 M989.8,166.2 L986.9,237.5 M1005.0,157.3 L1005.0,207.0 M1016.0,160.1 L1016.0,203.2 M1016.0,172.1 L1020.8,247.5 M1022.4,163.2 L1022.4,225.0" stroke="#140c06" stroke-width="3.6" fill="none" stroke-linecap="butt"/><path d="M1023.6,166.4 L1023.6,230.4 M1023.6,179.3 L1035.1,260.6 M1019.8,169.6 L1019.8,226.5 M1011.1,172.5 L1011.1,221.8 M1011.1,186.3 L1027.1,274.0 M997.9,175.2 L997.9,245.1 M980.9,177.3 L980.9,238.8 M980.9,191.7 L998.2,285.2 M961.0,178.9 L961.0,231.2 M939.1,179.8 L939.1,252.8 M939.1,194.5 L954.2,291.9 M916.3,179.9 L916.3,242.9 M893.8,179.4 L893.8,232.0 M893.8,194.1 L903.9,292.8 M872.8,178.2 L872.8,250.1 M854.2,176.3 L854.2,237.2 M854.2,190.6 L857.1,287.7 M839.0,173.9 L839.0,223.8 M828.0,171.1 L828.0,238.2 M828.0,184.7 L823.2,277.6 M821.6,168.0 L821.6,224.0 M820.4,164.8 L820.4,210.2 M820.4,177.5 L808.9,264.5 M824.2,161.6 L824.2,222.3 M832.9,158.6 L832.9,209.2 M832.9,170.5 L816.9,251.1 M846.1,156.0 L846.1,197.1 M863.1,153.9 L863.1,209.3 M863.1,165.1 L845.8,239.9 M883.0,152.3 L883.0,199.2 M904.9,151.4 L904.9,190.3 M904.9,162.3 L889.8,233.2 M927.7,151.2 L927.7,204.9 M950.2,151.8 L950.2,198.3 M950.2,162.7 L940.1,232.3 M971.2,153.0 L971.2,192.7 M989.8,154.9 L989.8,211.0 M989.8,166.2 L986.9,237.5 M1005.0,157.3 L1005.0,207.0 M1016.0,160.1 L1016.0,203.2 M1016.0,172.1 L1020.8,247.5 M1022.4,163.2 L1022.4,225.0" stroke="#6a4424" stroke-width="1.8" fill="none" stroke-linecap="butt"/><ellipse cx="922" cy="263.5" rx="145" ry="39.5" fill="#f4a552" stroke="#1e140c" stroke-width="2.5"/><ellipse cx="920.5" cy="262" rx="12" ry="3.6" fill="#4a3a30" stroke="#141010" stroke-width="1.6"/><ellipse cx="920.5" cy="261" rx="10" ry="2.4" fill="#f4a552" stroke="none"/><path d="M941,260 L950,257 L967,258 L967,268 L958,272 L941,270 Z" fill="none" stroke="#141010" stroke-width="1.8"/><path d="M950,257 V267 L941,270 M950,267 L967,268 M958,272 V262 L967,258" fill="none" stroke="#141010" stroke-width="1.2"/><ellipse cx="954" cy="271" rx="13" ry="3.5" fill="#2a2018" stroke="#141010" stroke-width="1"/><path d="M946,266 V284" stroke="#141010" stroke-width="2"/><path d="M1068.0,262.6 L1067.7,265.1 L1066.8,267.7 L1065.2,270.2 L1063.0,272.8 L1060.3,275.2 L1056.9,277.6 L1052.9,280.0 L1048.4,282.3 L1043.4,284.5 L1037.8,286.6 L1031.8,288.5 L1025.2,290.4 L1018.3,292.2 L1010.9,293.8 L1003.1,295.3 L995.0,296.7 L986.6,297.9 L977.9,299.0 L968.9,299.9 L959.8,300.6 L950.5,301.2 L941.1,301.6 L931.5,301.9 L922.0,302.0 L912.5,301.9 L902.9,301.6 L893.5,301.2 L884.2,300.6 L875.1,299.9 L866.1,299.0 L857.4,297.9 L849.0,296.7 L840.9,295.3 L833.1,293.8 L825.7,292.2 L818.8,290.4 L812.2,288.5 L806.2,286.6 L800.6,284.5 L795.6,282.3 L791.1,280.0 L787.1,277.6 L783.7,275.2 L781.0,272.8 L778.8,270.2 L777.2,267.7 L776.3,265.1 L776.0,262.6" stroke="#141416" stroke-width="6" fill="none"/><path d="M1068.0,262.6 L1067.7,265.1 L1066.8,267.7 L1065.2,270.2 L1063.0,272.8 L1060.3,275.2 L1056.9,277.6 L1052.9,280.0 L1048.4,282.3 L1043.4,284.5 L1037.8,286.6 L1031.8,288.5 L1025.2,290.4 L1018.3,292.2 L1010.9,293.8 L1003.1,295.3 L995.0,296.7 L986.6,297.9 L977.9,299.0 L968.9,299.9 L959.8,300.6 L950.5,301.2 L941.1,301.6 L931.5,301.9 L922.0,302.0 L912.5,301.9 L902.9,301.6 L893.5,301.2 L884.2,300.6 L875.1,299.9 L866.1,299.0 L857.4,297.9 L849.0,296.7 L840.9,295.3 L833.1,293.8 L825.7,292.2 L818.8,290.4 L812.2,288.5 L806.2,286.6 L800.6,284.5 L795.6,282.3 L791.1,280.0 L787.1,277.6 L783.7,275.2 L781.0,272.8 L778.8,270.2 L777.2,267.7 L776.3,265.1 L776.0,262.6" stroke="#2a1c14" stroke-width="4" fill="none"/><path d="M1019.0,306.9 L1018.8,308.6 L1018.2,310.3 L1017.1,312.0 L1015.7,313.6 L1013.9,315.3 L1011.6,316.9 L1009.0,318.4 L1006.0,319.9 L1002.7,321.4 L999.0,322.8 L994.9,324.1 L990.6,325.4 L986.0,326.5 L981.0,327.6 L975.9,328.6 L970.5,329.5 L964.9,330.3 L959.1,331.1 L953.2,331.7 L947.1,332.2 L940.9,332.5 L934.7,332.8 L928.3,333.0 L922.0,333.0 L915.7,333.0 L909.3,332.8 L903.1,332.5 L896.9,332.2 L890.8,331.7 L884.9,331.1 L879.1,330.3 L873.5,329.5 L868.1,328.6 L863.0,327.6 L858.0,326.5 L853.4,325.4 L849.1,324.1 L845.0,322.8 L841.3,321.4 L838.0,319.9 L835.0,318.4 L832.4,316.9 L830.1,315.3 L828.3,313.6 L826.9,312.0 L825.8,310.3 L825.2,308.6 L825.0,306.9" stroke="#141416" stroke-width="4.2" fill="none"/><path d="M1019.0,306.9 L1018.8,308.6 L1018.2,310.3 L1017.1,312.0 L1015.7,313.6 L1013.9,315.3 L1011.6,316.9 L1009.0,318.4 L1006.0,319.9 L1002.7,321.4 L999.0,322.8 L994.9,324.1 L990.6,325.4 L986.0,326.5 L981.0,327.6 L975.9,328.6 L970.5,329.5 L964.9,330.3 L959.1,331.1 L953.2,331.7 L947.1,332.2 L940.9,332.5 L934.7,332.8 L928.3,333.0 L922.0,333.0 L915.7,333.0 L909.3,332.8 L903.1,332.5 L896.9,332.2 L890.8,331.7 L884.9,331.1 L879.1,330.3 L873.5,329.5 L868.1,328.6 L863.0,327.6 L858.0,326.5 L853.4,325.4 L849.1,324.1 L845.0,322.8 L841.3,321.4 L838.0,319.9 L835.0,318.4 L832.4,316.9 L830.1,315.3 L828.3,313.6 L826.9,312.0 L825.8,310.3 L825.2,308.6 L825.0,306.9" stroke="#9a9aa0" stroke-width="1.8" fill="none"/><path d="M950.7,115.0 L958.4,116.8 L966.0,119.1 L973.4,121.8 L980.8,124.8 L987.9,128.3 L994.9,132.1 L1001.7,136.2 L1008.3,140.7 L1014.6,145.4 L1020.7,150.5 L1026.5,155.8 L1032.0,161.3 L1037.2,167.0 L1042.1,172.6 L1046.7,178.4 L1050.9,184.4 L1054.8,190.7 L1058.3,197.1 L1061.5,203.6 L1064.2,210.3 L1066.6,217.1 L1068.6,224.0 L1070.1,231.0 L1071.3,238.0 L1072.1,245.1 L1072.4,252.2 L1072.4,254.6 L1071.4,268.0 L1069.4,281.4 L1065.5,293.9 L1059.5,304.3 L1052.5,312.8 L1043.5,320.3 L1034.6,325.9 L1027.6,328.1 L1021.6,326.5 L1017.6,321.6 L1016.6,314.9 L1017.6,308.2 M949.8,115.7 L957.3,117.7 L964.6,120.2 L971.9,123.0 L979.0,126.3 L985.9,129.9 L992.7,133.8 L999.3,138.1 L1005.7,142.7 L1011.8,147.7 L1017.7,152.8 L1023.3,158.3 L1028.7,164.0 L1033.7,169.8 L1038.5,175.7 L1042.9,181.8 L1047.0,188.2 L1050.8,194.7 L1054.2,201.4 L1057.2,208.3 L1059.9,215.3 L1062.2,222.4 L1064.1,229.7 L1065.6,237.0 L1066.8,244.3 L1067.5,251.7 L1067.8,259.1 L1067.9,261.6 L1066.9,275.0 L1065.0,288.3 L1061.1,300.5 L1055.3,310.7 L1048.5,318.9 L1039.8,326.0 L1031.1,331.1 L1024.4,333.0 L1018.6,331.2 L1014.7,326.1 L1013.8,319.3 L1014.7,312.6 M948.1,116.3 L955.1,118.5 L962.0,121.2 L968.8,124.2 L975.5,127.6 L982.0,131.4 L988.3,135.5 L994.5,140.0 L1000.5,144.7 L1006.3,149.8 L1011.8,155.1 L1017.1,160.7 L1022.1,166.5 L1026.8,172.5 L1031.3,178.6 L1035.5,185.1 L1039.3,191.7 L1042.8,198.5 L1046.0,205.6 L1048.9,212.8 L1051.4,220.1 L1053.6,227.5 L1055.3,235.1 L1056.8,242.7 L1057.8,250.4 L1058.5,258.0 L1058.8,265.7 L1058.9,268.2 L1057.9,281.6 L1056.1,294.9 L1052.5,306.9 L1047.1,316.8 L1040.7,324.7 L1032.6,331.4 L1024.4,336.1 L1018.1,337.7 L1012.6,335.6 L1009.0,330.3 L1008.1,323.5 L1009.0,316.8 M945.6,116.9 L951.9,119.3 L958.2,122.1 L964.3,125.3 L970.3,128.9 L976.2,132.8 L982.0,137.1 L987.5,141.7 L992.9,146.6 L998.2,151.8 L1003.1,157.2 L1007.9,162.9 L1012.5,168.8 L1016.8,175.0 L1020.8,181.4 L1024.5,188.0 L1028.0,194.9 L1031.2,202.1 L1034.1,209.4 L1036.7,216.9 L1039.0,224.5 L1040.9,232.3 L1042.5,240.1 L1043.8,248.0 L1044.8,255.9 L1045.4,263.9 L1045.7,271.8 L1045.7,274.4 L1044.9,287.7 L1043.2,300.9 L1040.0,312.8 L1035.0,322.4 L1029.3,330.0 L1021.9,336.3 L1014.6,340.7 L1008.8,342.0 L1003.9,339.7 L1000.6,334.2 L999.8,327.3 L1000.6,320.8 M942.4,117.5 L947.8,120.0 L953.2,122.9 L958.5,126.3 L963.7,130.0 L968.8,134.0 L973.8,138.4 L978.6,143.2 L983.2,148.2 L987.7,153.5 L992.0,159.1 L996.2,164.9 L1000.1,170.9 L1003.8,177.1 L1007.3,183.8 L1010.5,190.7 L1013.5,197.8 L1016.3,205.2 L1018.8,212.8 L1021.0,220.5 L1023.0,228.4 L1024.6,236.4 L1026.0,244.5 L1027.2,252.7 L1028.0,260.8 L1028.5,269.0 L1028.8,277.1 L1028.8,279.8 L1028.1,293.1 L1026.7,306.2 L1023.8,318.0 L1019.6,327.4 L1014.6,334.8 L1008.3,340.7 L1001.9,344.8 L997.0,345.9 L992.7,343.3 L989.9,337.7 L989.2,330.8 L989.9,324.2 M938.5,117.9 L943.0,120.6 L947.3,123.6 L951.6,127.1 L955.8,130.9 L960.0,135.1 L964.0,139.6 L967.9,144.4 L971.7,149.5 L975.3,155.0 L978.8,160.6 L982.2,166.5 L985.3,172.6 L988.3,179.0 L991.2,185.8 L993.8,192.9 L996.2,200.3 L998.5,207.8 L1000.5,215.6 L1002.3,223.6 L1003.9,231.7 L1005.3,239.9 L1006.4,248.2 L1007.3,256.6 L1008.0,265.0 L1008.4,273.3 L1008.6,281.6 L1008.6,284.4 L1008.0,297.7 L1006.9,310.7 L1004.6,322.3 L1001.2,331.6 L997.1,338.7 L992.0,344.4 L986.8,348.2 L982.8,349.1 L979.4,346.3 L977.1,340.6 L976.5,333.6 L977.1,327.1 M934.2,118.3 L937.4,121.0 L940.7,124.2 L943.8,127.7 L946.9,131.6 L950.0,135.9 L952.9,140.5 L955.8,145.4 L958.6,150.6 L961.3,156.1 L963.9,161.8 L966.3,167.8 L968.7,174.0 L970.9,180.4 L973.0,187.4 L974.9,194.6 L976.7,202.1 L978.3,209.9 L979.8,217.8 L981.2,226.0 L982.3,234.2 L983.3,242.6 L984.2,251.1 L984.8,259.6 L985.3,268.2 L985.7,276.7 L985.8,285.1 L985.8,288.0 L985.4,301.2 L984.5,314.2 L982.9,325.7 L980.3,334.8 L977.4,341.8 L973.6,347.3 L969.8,350.9 L966.8,351.6 L964.3,348.7 L962.6,342.9 L962.1,335.9 L962.6,329.4 M929.5,118.5 L931.5,121.3 L933.4,124.5 L935.4,128.1 L937.3,132.1 L939.1,136.4 L940.9,141.1 L942.7,146.1 L944.4,151.3 L946.1,156.9 L947.6,162.7 L949.1,168.7 L950.6,174.9 L951.9,181.4 L953.2,188.4 L954.4,195.8 L955.5,203.4 L956.5,211.3 L957.4,219.3 L958.2,227.6 L959.0,236.0 L959.6,244.5 L960.1,253.1 L960.5,261.7 L960.8,270.4 L961.0,279.0 L961.1,287.5 L961.1,290.4 L960.8,303.6 L960.3,316.6 L959.3,328.0 L957.7,337.1 L955.9,343.9 L953.6,349.3 L951.2,352.7 L949.4,353.3 L947.9,350.3 L946.8,344.4 L946.6,337.4 L946.8,330.9 M924.5,118.7 L925.2,121.5 L925.8,124.7 L926.5,128.4 L927.1,132.4 L927.8,136.7 L928.4,141.4 L929.0,146.4 L929.5,151.7 L930.1,157.3 L930.6,163.1 L931.1,169.1 L931.6,175.4 L932.1,181.9 L932.5,189.0 L932.9,196.4 L933.3,204.1 L933.6,212.0 L933.9,220.1 L934.2,228.4 L934.4,236.9 L934.7,245.4 L934.8,254.1 L935.0,262.8 L935.1,271.5 L935.1,280.1 L935.2,288.8 L935.2,291.6 L935.1,304.8 L934.9,317.8 L934.6,329.2 L934.0,338.2 L933.4,345.0 L932.6,350.3 L931.8,353.6 L931.2,354.1 L930.7,351.1 L930.4,345.2 L930.3,338.2 L930.4,331.7 M919.5,118.7 L918.8,121.5 L918.2,124.7 L917.5,128.4 L916.9,132.4 L916.2,136.7 L915.6,141.4 L915.0,146.4 L914.5,151.7 L913.9,157.3 L913.4,163.1 L912.9,169.1 L912.4,175.4 L911.9,181.9 L911.5,189.0 L911.1,196.4 L910.7,204.1 L910.4,212.0 L910.1,220.1 L909.8,228.4 L909.6,236.9 L909.3,245.4 L909.2,254.1 L909.0,262.8 L908.9,271.5 L908.9,280.1 L908.8,288.8 L908.8,291.6 L908.9,304.8 L909.1,317.8 L909.4,329.2 L910.0,338.2 L910.6,345.0 L911.4,350.3 L912.2,353.6 L912.8,354.1 L913.3,351.1 L913.6,345.2 L913.7,338.2 L913.6,331.7 M914.5,118.5 L912.5,121.3 L910.6,124.5 L908.6,128.1 L906.7,132.1 L904.9,136.4 L903.1,141.1 L901.3,146.1 L899.6,151.3 L897.9,156.9 L896.4,162.7 L894.9,168.7 L893.4,174.9 L892.1,181.4 L890.8,188.4 L889.6,195.8 L888.5,203.4 L887.5,211.3 L886.6,219.3 L885.8,227.6 L885.0,236.0 L884.4,244.5 L883.9,253.1 L883.5,261.7 L883.2,270.4 L883.0,279.0 L882.9,287.5 L882.9,290.4 L883.2,303.6 L883.7,316.6 L884.7,328.0 L886.3,337.1 L888.1,343.9 L890.4,349.3 L892.8,352.7 L894.6,353.3 L896.1,350.3 L897.2,344.4 L897.4,337.4 L897.2,330.9 M909.8,118.3 L906.6,121.0 L903.3,124.2 L900.2,127.7 L897.1,131.6 L894.0,135.9 L891.1,140.5 L888.2,145.4 L885.4,150.6 L882.7,156.1 L880.1,161.8 L877.7,167.8 L875.3,174.0 L873.1,180.4 L871.0,187.4 L869.1,194.6 L867.3,202.1 L865.7,209.9 L864.2,217.8 L862.8,226.0 L861.7,234.2 L860.7,242.6 L859.8,251.1 L859.2,259.6 L858.7,268.2 L858.3,276.7 L858.2,285.1 L858.2,288.0 L858.6,301.2 L859.5,314.2 L861.1,325.7 L863.7,334.8 L866.6,341.8 L870.4,347.3 L874.2,350.9 L877.2,351.6 L879.7,348.7 L881.4,342.9 L881.9,335.9 L881.4,329.4 M905.5,117.9 L901.0,120.6 L896.7,123.6 L892.4,127.1 L888.2,130.9 L884.0,135.1 L880.0,139.6 L876.1,144.4 L872.3,149.5 L868.7,155.0 L865.2,160.6 L861.8,166.5 L858.7,172.6 L855.7,179.0 L852.8,185.8 L850.2,192.9 L847.8,200.3 L845.5,207.8 L843.5,215.6 L841.7,223.6 L840.1,231.7 L838.7,239.9 L837.6,248.2 L836.7,256.6 L836.0,265.0 L835.6,273.3 L835.4,281.6 L835.4,284.4 L836.0,297.7 L837.1,310.7 L839.4,322.3 L842.8,331.6 L846.9,338.7 L852.0,344.4 L857.2,348.2 L861.2,349.1 L864.6,346.3 L866.9,340.6 L867.5,333.6 L866.9,327.1 M901.6,117.5 L896.2,120.0 L890.8,122.9 L885.5,126.3 L880.3,130.0 L875.2,134.0 L870.2,138.4 L865.4,143.2 L860.8,148.2 L856.3,153.5 L852.0,159.1 L847.8,164.9 L843.9,170.9 L840.2,177.1 L836.7,183.8 L833.5,190.7 L830.5,197.8 L827.7,205.2 L825.2,212.8 L823.0,220.5 L821.0,228.4 L819.4,236.4 L818.0,244.5 L816.8,252.7 L816.0,260.8 L815.5,269.0 L815.2,277.1 L815.2,279.8 L815.9,293.1 L817.3,306.2 L820.2,318.0 L824.4,327.4 L829.4,334.8 L835.7,340.7 L842.1,344.8 L847.0,345.9 L851.3,343.3 L854.1,337.7 L854.8,330.8 L854.1,324.2 M898.4,116.9 L892.1,119.3 L885.8,122.1 L879.7,125.3 L873.7,128.9 L867.8,132.8 L862.0,137.1 L856.5,141.7 L851.1,146.6 L845.8,151.8 L840.9,157.2 L836.1,162.9 L831.5,168.8 L827.2,175.0 L823.2,181.4 L819.5,188.0 L816.0,194.9 L812.8,202.1 L809.9,209.4 L807.3,216.9 L805.0,224.5 L803.1,232.3 L801.5,240.1 L800.2,248.0 L799.2,255.9 L798.6,263.9 L798.3,271.8 L798.3,274.4 L799.1,287.7 L800.8,300.9 L804.0,312.8 L809.0,322.4 L814.7,330.0 L822.1,336.3 L829.4,340.7 L835.2,342.0 L840.1,339.7 L843.4,334.2 L844.2,327.3 L843.4,320.8 M895.9,116.3 L888.9,118.5 L882.0,121.2 L875.2,124.2 L868.5,127.6 L862.0,131.4 L855.7,135.5 L849.5,140.0 L843.5,144.7 L837.7,149.8 L832.2,155.1 L826.9,160.7 L821.9,166.5 L817.2,172.5 L812.7,178.6 L808.5,185.1 L804.7,191.7 L801.2,198.5 L798.0,205.6 L795.1,212.8 L792.6,220.1 L790.4,227.5 L788.7,235.1 L787.2,242.7 L786.2,250.4 L785.5,258.0 L785.2,265.7 L785.1,268.2 L786.1,281.6 L787.9,294.9 L791.5,306.9 L796.9,316.8 L803.3,324.7 L811.4,331.4 L819.6,336.1 L825.9,337.7 L831.4,335.6 L835.0,330.3 L835.9,323.5 L835.0,316.8 M894.2,115.7 L886.7,117.7 L879.4,120.2 L872.1,123.0 L865.0,126.3 L858.1,129.9 L851.3,133.8 L844.7,138.1 L838.3,142.7 L832.2,147.7 L826.3,152.8 L820.7,158.3 L815.3,164.0 L810.3,169.8 L805.5,175.7 L801.1,181.8 L797.0,188.2 L793.2,194.7 L789.8,201.4 L786.8,208.3 L784.1,215.3 L781.8,222.4 L779.9,229.7 L778.4,237.0 L777.2,244.3 L776.5,251.7 L776.2,259.1 L776.1,261.6 L777.1,275.0 L779.0,288.3 L782.9,300.5 L788.7,310.7 L795.5,318.9 L804.2,326.0 L812.9,331.1 L819.6,333.0 L825.4,331.2 L829.3,326.1 L830.2,319.3 L829.3,312.6 M893.3,115.0 L885.6,116.8 L878.0,119.1 L870.6,121.8 L863.2,124.8 L856.1,128.3 L849.1,132.1 L842.3,136.2 L835.7,140.7 L829.4,145.4 L823.3,150.5 L817.5,155.8 L812.0,161.3 L806.8,167.0 L801.9,172.6 L797.3,178.4 L793.1,184.4 L789.2,190.7 L785.7,197.1 L782.5,203.6 L779.8,210.3 L777.4,217.1 L775.4,224.0 L773.9,231.0 L772.7,238.0 L771.9,245.1 L771.6,252.2 L771.6,254.6 L772.6,268.0 L774.6,281.4 L778.5,293.9 L784.5,304.3 L791.5,312.8 L800.5,320.3 L809.4,325.9 L816.4,328.1 L822.4,326.5 L826.4,321.6 L827.4,314.9 L826.4,308.2" stroke="#141418" stroke-width="4.6" fill="none" stroke-linejoin="round"/><path d="M950.7,115.0 L958.4,116.8 L966.0,119.1 L973.4,121.8 L980.8,124.8 L987.9,128.3 L994.9,132.1 L1001.7,136.2 L1008.3,140.7 L1014.6,145.4 L1020.7,150.5 L1026.5,155.8 L1032.0,161.3 L1037.2,167.0 L1042.1,172.6 L1046.7,178.4 L1050.9,184.4 L1054.8,190.7 L1058.3,197.1 L1061.5,203.6 L1064.2,210.3 L1066.6,217.1 L1068.6,224.0 L1070.1,231.0 L1071.3,238.0 L1072.1,245.1 L1072.4,252.2 L1072.4,254.6 L1071.4,268.0 L1069.4,281.4 L1065.5,293.9 L1059.5,304.3 L1052.5,312.8 L1043.5,320.3 L1034.6,325.9 L1027.6,328.1 L1021.6,326.5 L1017.6,321.6 L1016.6,314.9 L1017.6,308.2 M949.8,115.7 L957.3,117.7 L964.6,120.2 L971.9,123.0 L979.0,126.3 L985.9,129.9 L992.7,133.8 L999.3,138.1 L1005.7,142.7 L1011.8,147.7 L1017.7,152.8 L1023.3,158.3 L1028.7,164.0 L1033.7,169.8 L1038.5,175.7 L1042.9,181.8 L1047.0,188.2 L1050.8,194.7 L1054.2,201.4 L1057.2,208.3 L1059.9,215.3 L1062.2,222.4 L1064.1,229.7 L1065.6,237.0 L1066.8,244.3 L1067.5,251.7 L1067.8,259.1 L1067.9,261.6 L1066.9,275.0 L1065.0,288.3 L1061.1,300.5 L1055.3,310.7 L1048.5,318.9 L1039.8,326.0 L1031.1,331.1 L1024.4,333.0 L1018.6,331.2 L1014.7,326.1 L1013.8,319.3 L1014.7,312.6 M948.1,116.3 L955.1,118.5 L962.0,121.2 L968.8,124.2 L975.5,127.6 L982.0,131.4 L988.3,135.5 L994.5,140.0 L1000.5,144.7 L1006.3,149.8 L1011.8,155.1 L1017.1,160.7 L1022.1,166.5 L1026.8,172.5 L1031.3,178.6 L1035.5,185.1 L1039.3,191.7 L1042.8,198.5 L1046.0,205.6 L1048.9,212.8 L1051.4,220.1 L1053.6,227.5 L1055.3,235.1 L1056.8,242.7 L1057.8,250.4 L1058.5,258.0 L1058.8,265.7 L1058.9,268.2 L1057.9,281.6 L1056.1,294.9 L1052.5,306.9 L1047.1,316.8 L1040.7,324.7 L1032.6,331.4 L1024.4,336.1 L1018.1,337.7 L1012.6,335.6 L1009.0,330.3 L1008.1,323.5 L1009.0,316.8 M945.6,116.9 L951.9,119.3 L958.2,122.1 L964.3,125.3 L970.3,128.9 L976.2,132.8 L982.0,137.1 L987.5,141.7 L992.9,146.6 L998.2,151.8 L1003.1,157.2 L1007.9,162.9 L1012.5,168.8 L1016.8,175.0 L1020.8,181.4 L1024.5,188.0 L1028.0,194.9 L1031.2,202.1 L1034.1,209.4 L1036.7,216.9 L1039.0,224.5 L1040.9,232.3 L1042.5,240.1 L1043.8,248.0 L1044.8,255.9 L1045.4,263.9 L1045.7,271.8 L1045.7,274.4 L1044.9,287.7 L1043.2,300.9 L1040.0,312.8 L1035.0,322.4 L1029.3,330.0 L1021.9,336.3 L1014.6,340.7 L1008.8,342.0 L1003.9,339.7 L1000.6,334.2 L999.8,327.3 L1000.6,320.8 M942.4,117.5 L947.8,120.0 L953.2,122.9 L958.5,126.3 L963.7,130.0 L968.8,134.0 L973.8,138.4 L978.6,143.2 L983.2,148.2 L987.7,153.5 L992.0,159.1 L996.2,164.9 L1000.1,170.9 L1003.8,177.1 L1007.3,183.8 L1010.5,190.7 L1013.5,197.8 L1016.3,205.2 L1018.8,212.8 L1021.0,220.5 L1023.0,228.4 L1024.6,236.4 L1026.0,244.5 L1027.2,252.7 L1028.0,260.8 L1028.5,269.0 L1028.8,277.1 L1028.8,279.8 L1028.1,293.1 L1026.7,306.2 L1023.8,318.0 L1019.6,327.4 L1014.6,334.8 L1008.3,340.7 L1001.9,344.8 L997.0,345.9 L992.7,343.3 L989.9,337.7 L989.2,330.8 L989.9,324.2 M938.5,117.9 L943.0,120.6 L947.3,123.6 L951.6,127.1 L955.8,130.9 L960.0,135.1 L964.0,139.6 L967.9,144.4 L971.7,149.5 L975.3,155.0 L978.8,160.6 L982.2,166.5 L985.3,172.6 L988.3,179.0 L991.2,185.8 L993.8,192.9 L996.2,200.3 L998.5,207.8 L1000.5,215.6 L1002.3,223.6 L1003.9,231.7 L1005.3,239.9 L1006.4,248.2 L1007.3,256.6 L1008.0,265.0 L1008.4,273.3 L1008.6,281.6 L1008.6,284.4 L1008.0,297.7 L1006.9,310.7 L1004.6,322.3 L1001.2,331.6 L997.1,338.7 L992.0,344.4 L986.8,348.2 L982.8,349.1 L979.4,346.3 L977.1,340.6 L976.5,333.6 L977.1,327.1 M934.2,118.3 L937.4,121.0 L940.7,124.2 L943.8,127.7 L946.9,131.6 L950.0,135.9 L952.9,140.5 L955.8,145.4 L958.6,150.6 L961.3,156.1 L963.9,161.8 L966.3,167.8 L968.7,174.0 L970.9,180.4 L973.0,187.4 L974.9,194.6 L976.7,202.1 L978.3,209.9 L979.8,217.8 L981.2,226.0 L982.3,234.2 L983.3,242.6 L984.2,251.1 L984.8,259.6 L985.3,268.2 L985.7,276.7 L985.8,285.1 L985.8,288.0 L985.4,301.2 L984.5,314.2 L982.9,325.7 L980.3,334.8 L977.4,341.8 L973.6,347.3 L969.8,350.9 L966.8,351.6 L964.3,348.7 L962.6,342.9 L962.1,335.9 L962.6,329.4 M929.5,118.5 L931.5,121.3 L933.4,124.5 L935.4,128.1 L937.3,132.1 L939.1,136.4 L940.9,141.1 L942.7,146.1 L944.4,151.3 L946.1,156.9 L947.6,162.7 L949.1,168.7 L950.6,174.9 L951.9,181.4 L953.2,188.4 L954.4,195.8 L955.5,203.4 L956.5,211.3 L957.4,219.3 L958.2,227.6 L959.0,236.0 L959.6,244.5 L960.1,253.1 L960.5,261.7 L960.8,270.4 L961.0,279.0 L961.1,287.5 L961.1,290.4 L960.8,303.6 L960.3,316.6 L959.3,328.0 L957.7,337.1 L955.9,343.9 L953.6,349.3 L951.2,352.7 L949.4,353.3 L947.9,350.3 L946.8,344.4 L946.6,337.4 L946.8,330.9 M924.5,118.7 L925.2,121.5 L925.8,124.7 L926.5,128.4 L927.1,132.4 L927.8,136.7 L928.4,141.4 L929.0,146.4 L929.5,151.7 L930.1,157.3 L930.6,163.1 L931.1,169.1 L931.6,175.4 L932.1,181.9 L932.5,189.0 L932.9,196.4 L933.3,204.1 L933.6,212.0 L933.9,220.1 L934.2,228.4 L934.4,236.9 L934.7,245.4 L934.8,254.1 L935.0,262.8 L935.1,271.5 L935.1,280.1 L935.2,288.8 L935.2,291.6 L935.1,304.8 L934.9,317.8 L934.6,329.2 L934.0,338.2 L933.4,345.0 L932.6,350.3 L931.8,353.6 L931.2,354.1 L930.7,351.1 L930.4,345.2 L930.3,338.2 L930.4,331.7 M919.5,118.7 L918.8,121.5 L918.2,124.7 L917.5,128.4 L916.9,132.4 L916.2,136.7 L915.6,141.4 L915.0,146.4 L914.5,151.7 L913.9,157.3 L913.4,163.1 L912.9,169.1 L912.4,175.4 L911.9,181.9 L911.5,189.0 L911.1,196.4 L910.7,204.1 L910.4,212.0 L910.1,220.1 L909.8,228.4 L909.6,236.9 L909.3,245.4 L909.2,254.1 L909.0,262.8 L908.9,271.5 L908.9,280.1 L908.8,288.8 L908.8,291.6 L908.9,304.8 L909.1,317.8 L909.4,329.2 L910.0,338.2 L910.6,345.0 L911.4,350.3 L912.2,353.6 L912.8,354.1 L913.3,351.1 L913.6,345.2 L913.7,338.2 L913.6,331.7 M914.5,118.5 L912.5,121.3 L910.6,124.5 L908.6,128.1 L906.7,132.1 L904.9,136.4 L903.1,141.1 L901.3,146.1 L899.6,151.3 L897.9,156.9 L896.4,162.7 L894.9,168.7 L893.4,174.9 L892.1,181.4 L890.8,188.4 L889.6,195.8 L888.5,203.4 L887.5,211.3 L886.6,219.3 L885.8,227.6 L885.0,236.0 L884.4,244.5 L883.9,253.1 L883.5,261.7 L883.2,270.4 L883.0,279.0 L882.9,287.5 L882.9,290.4 L883.2,303.6 L883.7,316.6 L884.7,328.0 L886.3,337.1 L888.1,343.9 L890.4,349.3 L892.8,352.7 L894.6,353.3 L896.1,350.3 L897.2,344.4 L897.4,337.4 L897.2,330.9 M909.8,118.3 L906.6,121.0 L903.3,124.2 L900.2,127.7 L897.1,131.6 L894.0,135.9 L891.1,140.5 L888.2,145.4 L885.4,150.6 L882.7,156.1 L880.1,161.8 L877.7,167.8 L875.3,174.0 L873.1,180.4 L871.0,187.4 L869.1,194.6 L867.3,202.1 L865.7,209.9 L864.2,217.8 L862.8,226.0 L861.7,234.2 L860.7,242.6 L859.8,251.1 L859.2,259.6 L858.7,268.2 L858.3,276.7 L858.2,285.1 L858.2,288.0 L858.6,301.2 L859.5,314.2 L861.1,325.7 L863.7,334.8 L866.6,341.8 L870.4,347.3 L874.2,350.9 L877.2,351.6 L879.7,348.7 L881.4,342.9 L881.9,335.9 L881.4,329.4 M905.5,117.9 L901.0,120.6 L896.7,123.6 L892.4,127.1 L888.2,130.9 L884.0,135.1 L880.0,139.6 L876.1,144.4 L872.3,149.5 L868.7,155.0 L865.2,160.6 L861.8,166.5 L858.7,172.6 L855.7,179.0 L852.8,185.8 L850.2,192.9 L847.8,200.3 L845.5,207.8 L843.5,215.6 L841.7,223.6 L840.1,231.7 L838.7,239.9 L837.6,248.2 L836.7,256.6 L836.0,265.0 L835.6,273.3 L835.4,281.6 L835.4,284.4 L836.0,297.7 L837.1,310.7 L839.4,322.3 L842.8,331.6 L846.9,338.7 L852.0,344.4 L857.2,348.2 L861.2,349.1 L864.6,346.3 L866.9,340.6 L867.5,333.6 L866.9,327.1 M901.6,117.5 L896.2,120.0 L890.8,122.9 L885.5,126.3 L880.3,130.0 L875.2,134.0 L870.2,138.4 L865.4,143.2 L860.8,148.2 L856.3,153.5 L852.0,159.1 L847.8,164.9 L843.9,170.9 L840.2,177.1 L836.7,183.8 L833.5,190.7 L830.5,197.8 L827.7,205.2 L825.2,212.8 L823.0,220.5 L821.0,228.4 L819.4,236.4 L818.0,244.5 L816.8,252.7 L816.0,260.8 L815.5,269.0 L815.2,277.1 L815.2,279.8 L815.9,293.1 L817.3,306.2 L820.2,318.0 L824.4,327.4 L829.4,334.8 L835.7,340.7 L842.1,344.8 L847.0,345.9 L851.3,343.3 L854.1,337.7 L854.8,330.8 L854.1,324.2 M898.4,116.9 L892.1,119.3 L885.8,122.1 L879.7,125.3 L873.7,128.9 L867.8,132.8 L862.0,137.1 L856.5,141.7 L851.1,146.6 L845.8,151.8 L840.9,157.2 L836.1,162.9 L831.5,168.8 L827.2,175.0 L823.2,181.4 L819.5,188.0 L816.0,194.9 L812.8,202.1 L809.9,209.4 L807.3,216.9 L805.0,224.5 L803.1,232.3 L801.5,240.1 L800.2,248.0 L799.2,255.9 L798.6,263.9 L798.3,271.8 L798.3,274.4 L799.1,287.7 L800.8,300.9 L804.0,312.8 L809.0,322.4 L814.7,330.0 L822.1,336.3 L829.4,340.7 L835.2,342.0 L840.1,339.7 L843.4,334.2 L844.2,327.3 L843.4,320.8 M895.9,116.3 L888.9,118.5 L882.0,121.2 L875.2,124.2 L868.5,127.6 L862.0,131.4 L855.7,135.5 L849.5,140.0 L843.5,144.7 L837.7,149.8 L832.2,155.1 L826.9,160.7 L821.9,166.5 L817.2,172.5 L812.7,178.6 L808.5,185.1 L804.7,191.7 L801.2,198.5 L798.0,205.6 L795.1,212.8 L792.6,220.1 L790.4,227.5 L788.7,235.1 L787.2,242.7 L786.2,250.4 L785.5,258.0 L785.2,265.7 L785.1,268.2 L786.1,281.6 L787.9,294.9 L791.5,306.9 L796.9,316.8 L803.3,324.7 L811.4,331.4 L819.6,336.1 L825.9,337.7 L831.4,335.6 L835.0,330.3 L835.9,323.5 L835.0,316.8 M894.2,115.7 L886.7,117.7 L879.4,120.2 L872.1,123.0 L865.0,126.3 L858.1,129.9 L851.3,133.8 L844.7,138.1 L838.3,142.7 L832.2,147.7 L826.3,152.8 L820.7,158.3 L815.3,164.0 L810.3,169.8 L805.5,175.7 L801.1,181.8 L797.0,188.2 L793.2,194.7 L789.8,201.4 L786.8,208.3 L784.1,215.3 L781.8,222.4 L779.9,229.7 L778.4,237.0 L777.2,244.3 L776.5,251.7 L776.2,259.1 L776.1,261.6 L777.1,275.0 L779.0,288.3 L782.9,300.5 L788.7,310.7 L795.5,318.9 L804.2,326.0 L812.9,331.1 L819.6,333.0 L825.4,331.2 L829.3,326.1 L830.2,319.3 L829.3,312.6 M893.3,115.0 L885.6,116.8 L878.0,119.1 L870.6,121.8 L863.2,124.8 L856.1,128.3 L849.1,132.1 L842.3,136.2 L835.7,140.7 L829.4,145.4 L823.3,150.5 L817.5,155.8 L812.0,161.3 L806.8,167.0 L801.9,172.6 L797.3,178.4 L793.1,184.4 L789.2,190.7 L785.7,197.1 L782.5,203.6 L779.8,210.3 L777.4,217.1 L775.4,224.0 L773.9,231.0 L772.7,238.0 L771.9,245.1 L771.6,252.2 L771.6,254.6 L772.6,268.0 L774.6,281.4 L778.5,293.9 L784.5,304.3 L791.5,312.8 L800.5,320.3 L809.4,325.9 L816.4,328.1 L822.4,326.5 L826.4,321.6 L827.4,314.9 L826.4,308.2" stroke="#b4b4be" stroke-width="1.6" fill="none" stroke-linejoin="round"/><path d="M997.5,132.5 L997.3,133.2 L996.9,133.9 L996.0,134.6 L994.9,135.2 L993.5,135.9 L991.8,136.5 L989.7,137.2 L987.4,137.8 L984.8,138.4 L981.9,138.9 L978.8,139.5 L975.4,140.0 L971.8,140.4 L968.0,140.9 L963.9,141.3 L959.8,141.6 L955.4,142.0 L950.9,142.3 L946.3,142.5 L941.5,142.7 L936.7,142.9 L931.9,143.0 L926.9,143.0 L922.0,143.1 L917.1,143.0 L912.1,143.0 L907.3,142.9 L902.5,142.7 L897.7,142.5 L893.1,142.3 L888.6,142.0 L884.2,141.6 L880.1,141.3 L876.0,140.9 L872.2,140.4 L868.6,140.0 L865.2,139.5 L862.1,138.9 L859.2,138.4 L856.6,137.8 L854.3,137.2 L852.2,136.5 L850.5,135.9 L849.1,135.2 L848.0,134.6 L847.1,133.9 L846.7,133.2 L846.5,132.5" stroke="#141416" stroke-width="4.2" fill="none"/><path d="M997.5,132.5 L997.3,133.2 L996.9,133.9 L996.0,134.6 L994.9,135.2 L993.5,135.9 L991.8,136.5 L989.7,137.2 L987.4,137.8 L984.8,138.4 L981.9,138.9 L978.8,139.5 L975.4,140.0 L971.8,140.4 L968.0,140.9 L963.9,141.3 L959.8,141.6 L955.4,142.0 L950.9,142.3 L946.3,142.5 L941.5,142.7 L936.7,142.9 L931.9,143.0 L926.9,143.0 L922.0,143.1 L917.1,143.0 L912.1,143.0 L907.3,142.9 L902.5,142.7 L897.7,142.5 L893.1,142.3 L888.6,142.0 L884.2,141.6 L880.1,141.3 L876.0,140.9 L872.2,140.4 L868.6,140.0 L865.2,139.5 L862.1,138.9 L859.2,138.4 L856.6,137.8 L854.3,137.2 L852.2,136.5 L850.5,135.9 L849.1,135.2 L848.0,134.6 L847.1,133.9 L846.7,133.2 L846.5,132.5" stroke="#6a5a44" stroke-width="1.8" fill="none"/><rect x="995.6" y="131.6" width="3.2" height="3.6" fill="#7a5a38" stroke="#1a1208" stroke-width="0.6"/><rect x="993.3" y="133.4" width="3.2" height="3.6" fill="#7a5a38" stroke="#1a1208" stroke-width="0.6"/><rect x="988.8" y="135.2" width="3.2" height="3.6" fill="#7a5a38" stroke="#1a1208" stroke-width="0.6"/><rect x="982.2" y="136.8" width="3.2" height="3.6" fill="#7a5a38" stroke="#1a1208" stroke-width="0.6"/><rect x="973.8" y="138.2" width="3.2" height="3.6" fill="#7a5a38" stroke="#1a1208" stroke-width="0.6"/><rect x="963.7" y="139.4" width="3.2" height="3.6" fill="#7a5a38" stroke="#1a1208" stroke-width="0.6"/><rect x="952.3" y="140.3" width="3.2" height="3.6" fill="#7a5a38" stroke="#1a1208" stroke-width="0.6"/><rect x="939.9" y="140.9" width="3.2" height="3.6" fill="#7a5a38" stroke="#1a1208" stroke-width="0.6"/><rect x="927.0" y="141.2" width="3.2" height="3.6" fill="#7a5a38" stroke="#1a1208" stroke-width="0.6"/><rect x="913.8" y="141.2" width="3.2" height="3.6" fill="#7a5a38" stroke="#1a1208" stroke-width="0.6"/><rect x="900.9" y="140.9" width="3.2" height="3.6" fill="#7a5a38" stroke="#1a1208" stroke-width="0.6"/><rect x="888.5" y="140.3" width="3.2" height="3.6" fill="#7a5a38" stroke="#1a1208" stroke-width="0.6"/><rect x="877.1" y="139.4" width="3.2" height="3.6" fill="#7a5a38" stroke="#1a1208" stroke-width="0.6"/><rect x="867.0" y="138.2" width="3.2" height="3.6" fill="#7a5a38" stroke="#1a1208" stroke-width="0.6"/><rect x="858.6" y="136.8" width="3.2" height="3.6" fill="#7a5a38" stroke="#1a1208" stroke-width="0.6"/><rect x="852.0" y="135.2" width="3.2" height="3.6" fill="#7a5a38" stroke="#1a1208" stroke-width="0.6"/><rect x="847.5" y="133.4" width="3.2" height="3.6" fill="#7a5a38" stroke="#1a1208" stroke-width="0.6"/><rect x="845.2" y="131.6" width="3.2" height="3.6" fill="#7a5a38" stroke="#1a1208" stroke-width="0.6"/><path d="M1037.7,165.6 L1037.4,166.7 L1036.7,167.7 L1035.5,168.8 L1033.7,169.8 L1031.5,170.8 L1028.9,171.8 L1025.7,172.8 L1022.2,173.8 L1018.2,174.7 L1013.8,175.5 L1009.0,176.4 L1003.8,177.1 L998.3,177.9 L992.4,178.5 L986.3,179.2 L979.8,179.7 L973.2,180.2 L966.3,180.7 L959.2,181.1 L951.9,181.4 L944.6,181.6 L937.1,181.8 L929.6,181.9 L922.0,181.9 L914.4,181.9 L906.9,181.8 L899.4,181.6 L892.1,181.4 L884.8,181.1 L877.7,180.7 L870.8,180.2 L864.2,179.7 L857.7,179.2 L851.6,178.5 L845.7,177.9 L840.2,177.1 L835.0,176.4 L830.2,175.5 L825.8,174.7 L821.8,173.8 L818.3,172.8 L815.1,171.8 L812.5,170.8 L810.3,169.8 L808.5,168.8 L807.3,167.7 L806.6,166.7 L806.3,165.6" stroke="#141416" stroke-width="4.2" fill="none"/><path d="M1037.7,165.6 L1037.4,166.7 L1036.7,167.7 L1035.5,168.8 L1033.7,169.8 L1031.5,170.8 L1028.9,171.8 L1025.7,172.8 L1022.2,173.8 L1018.2,174.7 L1013.8,175.5 L1009.0,176.4 L1003.8,177.1 L998.3,177.9 L992.4,178.5 L986.3,179.2 L979.8,179.7 L973.2,180.2 L966.3,180.7 L959.2,181.1 L951.9,181.4 L944.6,181.6 L937.1,181.8 L929.6,181.9 L922.0,181.9 L914.4,181.9 L906.9,181.8 L899.4,181.6 L892.1,181.4 L884.8,181.1 L877.7,180.7 L870.8,180.2 L864.2,179.7 L857.7,179.2 L851.6,178.5 L845.7,177.9 L840.2,177.1 L835.0,176.4 L830.2,175.5 L825.8,174.7 L821.8,173.8 L818.3,172.8 L815.1,171.8 L812.5,170.8 L810.3,169.8 L808.5,168.8 L807.3,167.7 L806.6,166.7 L806.3,165.6" stroke="#6a5a44" stroke-width="1.8" fill="none"/><rect x="1035.6" y="165.2" width="3.2" height="3.6" fill="#7a5a38" stroke="#1a1208" stroke-width="0.6"/><rect x="1032.1" y="168.0" width="3.2" height="3.6" fill="#7a5a38" stroke="#1a1208" stroke-width="0.6"/><rect x="1025.2" y="170.7" width="3.2" height="3.6" fill="#7a5a38" stroke="#1a1208" stroke-width="0.6"/><rect x="1015.2" y="173.2" width="3.2" height="3.6" fill="#7a5a38" stroke="#1a1208" stroke-width="0.6"/><rect x="1002.2" y="175.3" width="3.2" height="3.6" fill="#7a5a38" stroke="#1a1208" stroke-width="0.6"/><rect x="986.7" y="177.2" width="3.2" height="3.6" fill="#7a5a38" stroke="#1a1208" stroke-width="0.6"/><rect x="969.3" y="178.6" width="3.2" height="3.6" fill="#7a5a38" stroke="#1a1208" stroke-width="0.6"/><rect x="950.3" y="179.6" width="3.2" height="3.6" fill="#7a5a38" stroke="#1a1208" stroke-width="0.6"/><rect x="930.5" y="180.1" width="3.2" height="3.6" fill="#7a5a38" stroke="#1a1208" stroke-width="0.6"/><rect x="910.3" y="180.1" width="3.2" height="3.6" fill="#7a5a38" stroke="#1a1208" stroke-width="0.6"/><rect x="890.5" y="179.6" width="3.2" height="3.6" fill="#7a5a38" stroke="#1a1208" stroke-width="0.6"/><rect x="871.5" y="178.6" width="3.2" height="3.6" fill="#7a5a38" stroke="#1a1208" stroke-width="0.6"/><rect x="854.1" y="177.2" width="3.2" height="3.6" fill="#7a5a38" stroke="#1a1208" stroke-width="0.6"/><rect x="838.6" y="175.3" width="3.2" height="3.6" fill="#7a5a38" stroke="#1a1208" stroke-width="0.6"/><rect x="825.6" y="173.2" width="3.2" height="3.6" fill="#7a5a38" stroke="#1a1208" stroke-width="0.6"/><rect x="815.6" y="170.7" width="3.2" height="3.6" fill="#7a5a38" stroke="#1a1208" stroke-width="0.6"/><rect x="808.7" y="168.0" width="3.2" height="3.6" fill="#7a5a38" stroke="#1a1208" stroke-width="0.6"/><rect x="805.2" y="165.2" width="3.2" height="3.6" fill="#7a5a38" stroke="#1a1208" stroke-width="0.6"/>
</g></svg>
<!-- left handle -->
<div class="abs" style="left:10px;top:512px;width:9px;height:39px;background:#f4f2f2;border-right:1px solid #3c3c3c;border-top:1px solid #3c3c3c;border-bottom:1px solid #3c3c3c"></div>
<div class="abs" style="left:11px;top:527px;width:6px;height:6px;border:1px solid #707070;border-radius:50%"></div>
<!-- triad -->
<svg class="abs" style="left:20px;top:890px" width="80" height="70" viewBox="20 890 80 70">
<text x="43" y="903" font-size="6" fill="#7fd07f" font-family="Liberation Sans">Y</text>
<path d="M46.5,936 V916" stroke="#18c018" stroke-width="2.5"/>
<path d="M42.5,917.5 L46.5,907.5 L50.5,917.5 Z" fill="#18c018"/>
<path d="M46,936 L68,938.5" stroke="#d01818" stroke-width="2.5"/>
<path d="M66,934.5 L75,939.5 L66,943 Z" fill="#d01818"/>
<text x="77" y="940" font-size="6" fill="#e07070" font-family="Liberation Sans">X</text>
<path d="M46.5,936 L36,944" stroke="#1818d0" stroke-width="3"/>
<path d="M38.5,939.5 L31.5,947 L41.5,945 Z" fill="#1818d0"/>
</svg>
<div class="abs" style="left:21px;top:977px;font-size:13.5px;font-weight:bold;color:#141414;white-space:nowrap">*Dimetric</div>
<!-- taskbar -->
<div id="taskbar" class="abs"></div>
<svg class="abs" style="left:0;top:1040px" width="48" height="40"><g fill="#fff"><rect x="16" y="12.5" width="7.3" height="7"/><rect x="24.3" y="11.3" width="8" height="8.2"/><rect x="16" y="20.5" width="7.3" height="7"/><rect x="24.3" y="20.5" width="8" height="8.2"/></g></svg>
<div class="abs" style="left:48px;top:1040px;width:344px;height:40px;background:#f0f0f0;border-top:1px solid #cfcfcf"></div>
<svg class="abs" style="left:56px;top:1046px" width="30" height="28"><circle cx="13.2" cy="11.6" r="5.6" fill="none" stroke="#222" stroke-width="1.4"/><path d="M9.2,15.6 L4.2,20.6" stroke="#222" stroke-width="1.5"/></svg>
<div class="abs" style="left:88px;top:1051px;font-size:14.8px;color:#303030;white-space:nowrap">Type here to search</div>
<svg class="abs" style="left:392px;top:1040px" width="520" height="40" viewBox="392 1040 520 40">
<circle cx="416" cy="1059.6" r="6.6" fill="none" stroke="#fff" stroke-width="1.8"/>
<g fill="none" stroke="#fff" stroke-width="1.3"><path d="M456.5,1052.5 H466.5 M456.5,1066.5 H466.5"/><rect x="457" y="1055" width="9" height="9"/><path d="M470.5,1052 V1054 M470.5,1059 V1067"/></g><rect x="469" y="1055.5" width="3" height="2.8" fill="#fff"/>
<path d="M525,1063.5 H508.5 Q509.5,1068 515,1068.5 Q520,1069 524.5,1067 V1070 Q519,1072 514,1071 Q505,1069 505,1060 Q505.5,1051 514,1050.5 Q524,1050 525.5,1060 Z M508.5,1059.5 H520 Q519,1054.5 514.5,1054.5 Q509.5,1055 508.5,1059.5 Z" fill="#1e7ed8"/>
<path d="M553,1051.5 H560 L562,1053.5 H574 V1068 H553 Z" fill="#f4c348"/>
<path d="M553,1055 H574 V1068 H553 Z" fill="#f8d470"/>
<path d="M558,1068 V1062 H569 V1068 H566 V1065 H561 V1068 Z" fill="#3c8ed6"/>
<circle cx="612.8" cy="1059.6" r="11" fill="#d84434"/>
<path d="M612.8,1059.6 L603.3,1065.1 A11,11 0 0 0 615.5,1070.2 Z" fill="#2a9a48"/>
<path d="M612.8,1059.6 L615.5,1070.2 A11,11 0 0 0 622.3,1054.1 Z" fill="#f4c430"/>
<path d="M603.3,1065.1 A11,11 0 0 1 603.5,1053.5 L608,1061 Z" fill="#2a9a48"/>
<circle cx="612.8" cy="1059.6" r="5" fill="#fff"/><circle cx="612.8" cy="1059.6" r="3.8" fill="#4285f4"/>
<circle cx="663.5" cy="1057" r="7.5" fill="none" stroke="#e0502a" stroke-width="2.6"/>
<path d="M662.5,1049 V1062 M662.5,1062 L668,1054" stroke="#e8e8e8" stroke-width="2"/>
<circle cx="657.5" cy="1066" r="2.6" fill="none" stroke="#2a7ad8" stroke-width="2"/><circle cx="664" cy="1069" r="2.6" fill="none" stroke="#2a7ad8" stroke-width="2"/>
<path d="M711,1048.5 L720.5,1054 V1065 L711,1070.5 L701.5,1065 V1054 Z" fill="#2e3c58" stroke="#8a8ea0" stroke-width="1.4"/>
<path d="M704.5,1064 L717.5,1055" stroke="#5a8ee8" stroke-width="1.8"/>
<rect x="748.3" y="1050.5" width="21.8" height="17.5" fill="#000" stroke="#9a9a9a" stroke-width="1"/>
<rect x="748.8" y="1051" width="21" height="2" fill="#b0b0b0"/>
<text x="750.5" y="1060" font-size="5.5" fill="#e0e0e0" font-family="Liberation Mono">C:\_</text>
<rect x="798" y="1051.5" width="21" height="16" fill="#e8eef4"/>
<rect x="804" y="1053" width="9" height="13" fill="#2a7ee0"/>
<path d="M846.5,1052 L858,1047.5 L869.5,1052 V1067 L858,1071.5 L846.5,1067 Z" fill="#c8141e"/>
<text x="848" y="1065" font-size="11" font-weight="bold" fill="#fff" font-family="Liberation Sans">S</text>
<text x="858" y="1062" font-size="10" font-weight="bold" fill="#fff" font-family="Liberation Sans">W</text>
<text x="850" y="1071.5" font-size="7.5" font-weight="bold" fill="#fff" font-family="Liberation Sans">2020</text>
<g fill="#99c4ea"><rect x="691" y="1078" width="40" height="2"/><rect x="740" y="1078" width="40" height="2"/><rect x="789" y="1078" width="40" height="2"/><rect x="838" y="1078" width="40" height="2"/></g>
</svg>
<!-- tray -->
<svg class="abs" style="left:1700px;top:1040px" width="220" height="40" viewBox="1700 1040 220 40">
<g fill="none" stroke="#fff" stroke-width="1.3">
<path d="M1713.2,1063 L1719,1057.3 L1724.8,1063"/>
<rect x="1739.5" y="1056.5" width="10.5" height="8"/>
<path d="M1737.5,1055 V1058 M1736,1058 H1739 M1737.5,1058 V1065"/>
<path d="M1763,1066 A10,10 0 0 1 1773,1055.5 M1765.8,1066 A7.2,7.2 0 0 1 1773,1058.3 M1768.6,1066 A4.4,4.4 0 0 1 1773,1061.2"/>
<path d="M1783,1057.5 H1786 L1790,1053.5 V1066.5 L1786,1062.5 H1783 Z"/>
<path d="M1792.5,1057 Q1794.5,1060 1792.5,1063 M1795,1055 Q1798.3,1060 1795,1065 M1797.5,1053 Q1802,1060 1797.5,1067" stroke="#bbb"/>
</g>
<rect x="1740.5" y="1057.5" width="7.5" height="6" fill="#fff"/>
<circle cx="1773.2" cy="1065.2" r="1.4" fill="#fff"/>
<path d="M1879,1052 H1895 V1063 H1887 L1883,1067 V1063 H1879 Z" fill="#fff"/>
<path d="M1881.5,1055 H1892.5 M1881.5,1057.8 H1892.5 M1881.5,1060.6 H1890" stroke="#202020" stroke-width="1"/>
<circle cx="1894.8" cy="1067" r="7.6" fill="#202020" stroke="#8a8a8a" stroke-width="1.2"/>
<text x="1891.5" y="1071" font-size="10.5" fill="#fff" font-family="Liberation Sans">1</text>
<rect x="1914.5" y="1040" width="1" height="40" fill="#6a6a6a"/>
</svg>
<div class="abs" style="left:1811px;top:1044px;font-size:12px;color:#fff;white-space:nowrap">12:19 PM</div>
<div class="abs" style="left:1808px;top:1062px;font-size:12px;color:#fff;white-space:nowrap">9/16/2020</div>
</body></html>
